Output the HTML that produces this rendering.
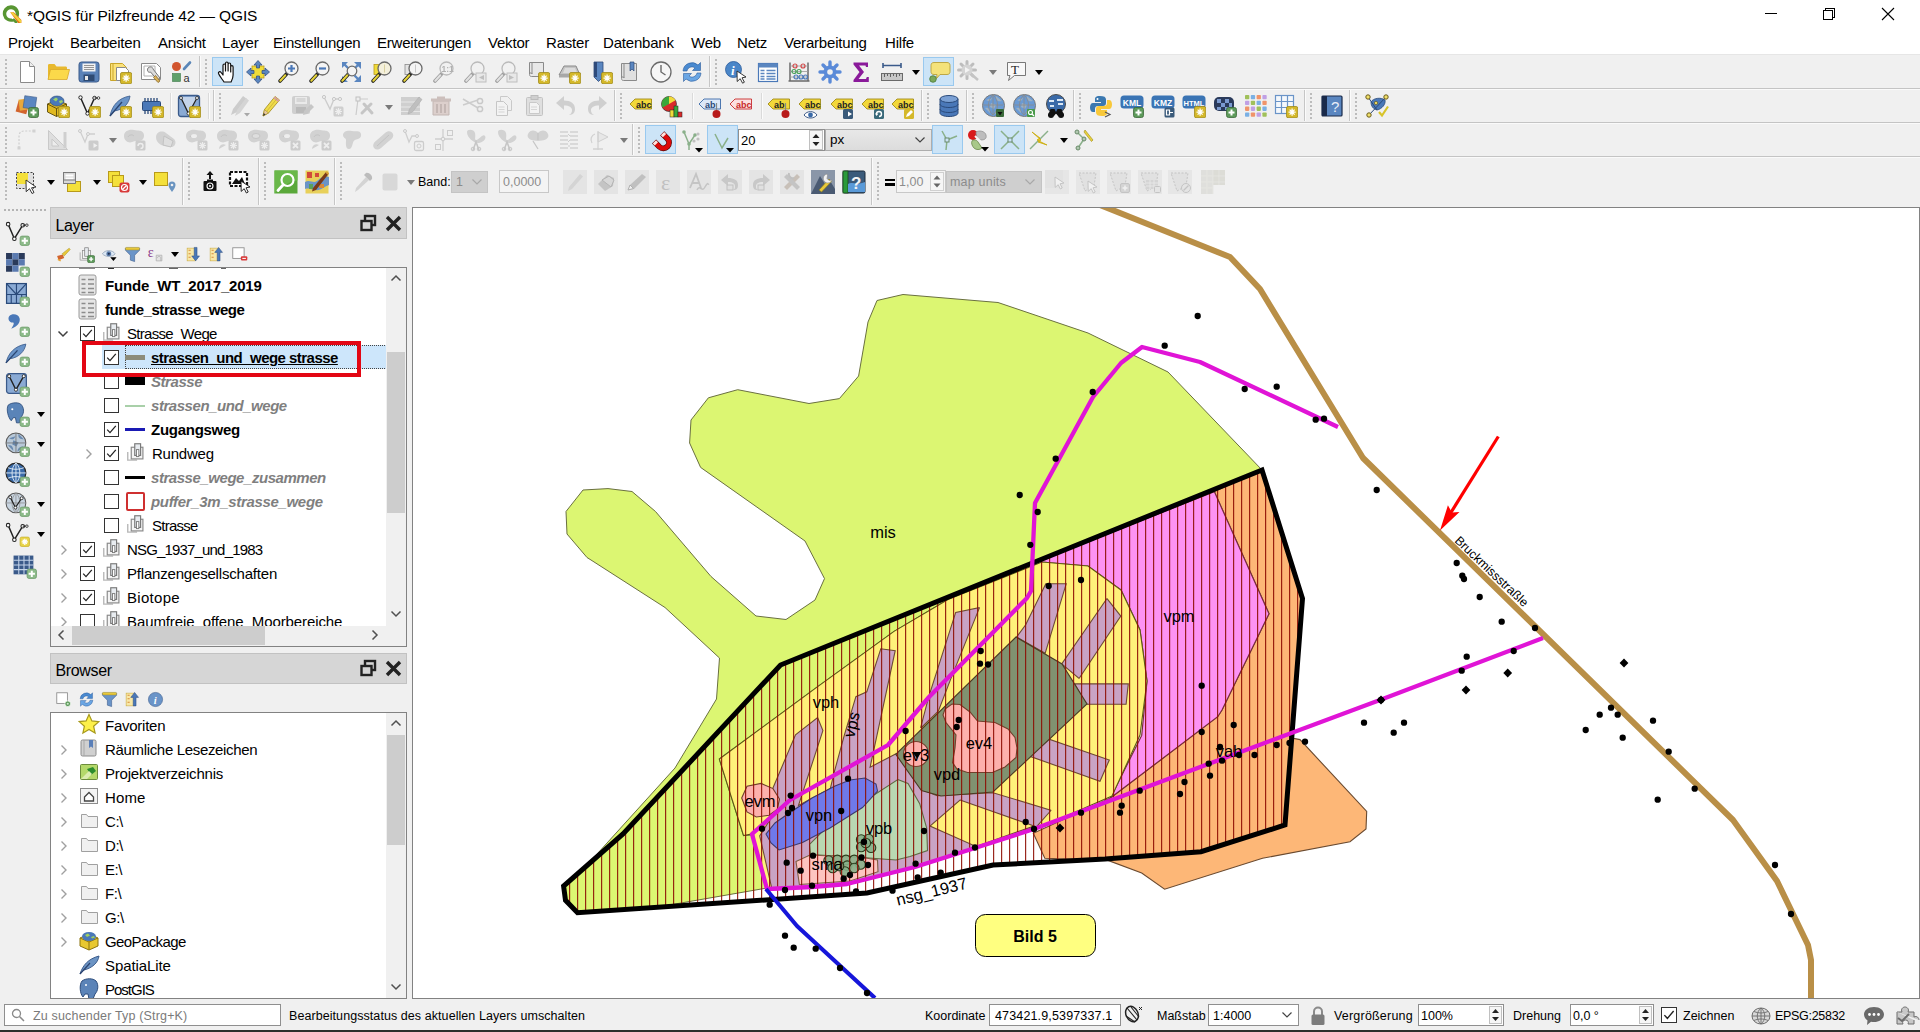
<!DOCTYPE html>
<html lang="de"><head><meta charset="utf-8"><title>QGIS</title>
<style>
*{box-sizing:border-box;margin:0;padding:0}
html,body{width:1920px;height:1032px;overflow:hidden;background:#f0f0f0;font-family:"Liberation Sans",sans-serif;color:#000}
#app{position:absolute;left:0;top:0;width:1920px;height:1032px;overflow:hidden;background:#f0f0f0}
.abs{position:absolute}
.t{position:absolute;white-space:nowrap;line-height:1}
#titlebar{position:absolute;left:0;top:0;width:1920px;height:30px;background:#fff}
#menubar{position:absolute;left:0;top:30px;width:1920px;height:25px;background:#fff}
.menu{position:absolute;top:35.3px;font-size:15px;letter-spacing:-0.2px;white-space:nowrap;line-height:1;color:#000}
.hline{position:absolute;height:1px;background:#c9c9c9;left:0;width:1920px}
.vsep{position:absolute;width:1px;background:#c8c8c8}
.grip{position:absolute;width:3px;border-left:2px dotted #bdbdbd}
.hl{position:absolute;background:#cce4f7;border:1px solid #99c9ef}
.dd{position:absolute;width:0;height:0;border-left:4px solid transparent;border-right:4px solid transparent;border-top:5px solid #000}
.dd.dis{border-top-color:#8a8a8a}
.ico{position:absolute;width:24px;height:24px}
.inp{position:absolute;background:#fff;border:1px solid #8f8f8f;font-size:13px;line-height:1;white-space:nowrap}
.inp.dis{background:#e4e4e4;border-color:#c4c4c4;color:#8c8c8c}
.panelhead{position:absolute;background:#d6d6d6;border:1px solid #c2c2c2}
.tree{position:absolute;background:#fff;border:1px solid #828282;overflow:hidden}
.row{position:absolute;font-size:15px;white-space:nowrap;line-height:1;letter-spacing:-0.45px}
.cb{position:absolute;width:15px;height:15px;border:1px solid #333;background:#fff}
.cb svg{position:absolute;left:0;top:0}
.sb{position:absolute;background:#f0f0f0}
.thumb{position:absolute;background:#cdcdcd}
</style></head><body><div id="app">

<!-- b_chrome -->
<div id="titlebar"></div><div id="menubar"></div>
<svg class="abs" style="left:1px;top:4px" width="22" height="20" viewBox="0 0 22 20">
<path d="M10 1.2a8.3 8.3 0 1 0 3.2 16l-2.6-2.7a4.7 4.7 0 1 1 3.9-3.6l2.6 2.6A8.3 8.3 0 0 0 10 1.2z" fill="#589632"/>
<path d="M9.2 8.3h3.6l7.6 7.8v2.9h-3.4z" fill="#ee7913"/><path d="M9.2 8.3l3 0.2 8 8v2.3h-1z" fill="#f0e64a" opacity=".85"/>
<path d="M13 14.2l3.4 3.6 0 1.2-2.4 0-3.2-3.4z" fill="#589632"/></svg>
<div class="t" style="left:27px;top:7.7px;font-size:15.5px;letter-spacing:-0.1px">*QGIS für Pilzfreunde 42 — QGIS</div>
<div class="abs" style="left:1765px;top:13px;width:12px;height:1px;background:#000"></div>
<div class="abs" style="left:1825px;top:8px;width:10px;height:10px;border:1px solid #000;background:#fff"></div>
<div class="abs" style="left:1823px;top:10px;width:10px;height:10px;border:1px solid #000;background:#fff"></div>
<svg class="abs" style="left:1881px;top:7px" width="14" height="14"><path d="M1 1L13 13M13 1L1 13" stroke="#000" stroke-width="1.1"/></svg>
<div class="menu" style="left:8px">Projekt</div>
<div class="menu" style="left:70px">Bearbeiten</div>
<div class="menu" style="left:158px">Ansicht</div>
<div class="menu" style="left:222px">Layer</div>
<div class="menu" style="left:273px">Einstellungen</div>
<div class="menu" style="left:377px">Erweiterungen</div>
<div class="menu" style="left:488px">Vektor</div>
<div class="menu" style="left:546px">Raster</div>
<div class="menu" style="left:603px">Datenbank</div>
<div class="menu" style="left:691px">Web</div>
<div class="menu" style="left:737px">Netz</div>
<div class="menu" style="left:784px">Verarbeitung</div>
<div class="menu" style="left:885px">Hilfe</div>
<div class="hline" style="top:54px;background:#e6e6e6"></div>
<div class="hline" style="top:88px;background:#c4c4c4"></div><div class="hline" style="top:89px;background:#fafafa"></div>
<div class="hline" style="top:122px;background:#c4c4c4"></div><div class="hline" style="top:123px;background:#fafafa"></div>
<div class="hline" style="top:156px;background:#c4c4c4"></div><div class="hline" style="top:157px;background:#fafafa"></div>
<!-- b_toolbars -->
<div class="abs" style="left:5px;top:59px;width:2px;height:27px;background-image:radial-gradient(circle at 1px 1px,#bcbcbc 0.8px,transparent 1.100px);background-size:2px 4px"></div>
<svg class="abs" style="left:15.0px;top:60.0px" width="24" height="24" viewBox="0 0 24 24"><path d="M5.500 1.500h9l5 5v16h-14z" fill="#fff" stroke="#8a8a8a"/><path d="M14.500 1.500v5h5" fill="#eee" stroke="#8a8a8a"/></svg>
<svg class="abs" style="left:45.7px;top:60.0px" width="24" height="24" viewBox="0 0 24 24"><path d="M2 5.500c0-1 .5-1.500 1.500-1.500h5l2 2.500h9c1 0 1.500.5 1.500 1.500v11h-19z" fill="#e8b92e"/><path d="M2 19.500l2.500-10h19l-2.500 10z" fill="#fbd94a" stroke="#d9a92a" stroke-width=".8"/></svg>
<svg class="abs" style="left:77.0px;top:60.0px" width="24" height="24" viewBox="0 0 24 24"><rect x="2" y="2" width="20" height="20" rx="2.500" fill="#5a82b8" stroke="#3a5a8a"/><rect x="5.500" y="3.500" width="13" height="8" fill="#f2f2f2"/><path d="M7 5.500h10M7 7.500h10M7 9.500h10" stroke="#8a8a8a" stroke-width=".9"/><rect x="6.500" y="14.500" width="11" height="6.500" fill="#2e4a72"/><rect x="8" y="16" width="3" height="4" fill="#e8e8e8"/></svg>
<svg class="abs" style="left:108.0px;top:60.0px" width="24" height="24" viewBox="0 0 24 24"><path d="M2.500 3.500h12l4 4v13h-16z" fill="#fbe27a" stroke="#c9a52a"/><path d="M5 3.500v17" stroke="#c9a52a"/><path d="M8.500 7.500h9l3 3v10h-12z" fill="#fff" stroke="#8a8a8a"/><rect x="12.500" y="12.500" width="11.200" height="11.200" rx="1.500" fill="#d4b82a" stroke="#a08a1a" stroke-width=".8"/><path d="M18.100 14.500v7.200M14.500 18.100h7.200M15.600 15.600l5 5M20.600 15.600l-5 5" stroke="#fff" stroke-width="1.300"/></svg>
<svg class="abs" style="left:139.0px;top:60.0px" width="24" height="24" viewBox="0 0 24 24"><path d="M2.500 3.500h15l4 4v12h-19z" fill="#fff" stroke="#8a8a8a"/><path d="M5 6h11v10h-11z" fill="none" stroke="#b0b0b0"/><path d="M9 8c2-2 5-1 5 1l7 9-2.500 2-7-8c-2 1-4-1-2.500-4z" fill="#dcdcdc" stroke="#6a6a6a" stroke-width=".9"/><path d="M16.500 15.500l4.500 5.500-2 1.500-4.500-5z" fill="#d9b25a" stroke="#8a6a2a" stroke-width=".8"/></svg>
<svg class="abs" style="left:169.7px;top:60.0px" width="24" height="24" viewBox="0 0 24 24"><circle cx="6.500" cy="6.500" r="4.500" fill="#d2552e"/><rect x="2.500" y="13.500" width="8" height="8" fill="#5fa06a" stroke="#3c7a4a" stroke-width=".6"/><path d="M14 9l6-6.500" stroke="#5a86b8" stroke-width="2.600" stroke-linecap="round"/><text x="13.500" y="21.500" font-size="11" font-family="Liberation Sans" fill="#333">a</text></svg>
<div class="abs" style="left:199px;top:56px;width:1px;height:31px;background:#c6c6c6"></div><div class="abs" style="left:200px;top:56px;width:1px;height:31px;background:#fbfbfb"></div>
<div class="abs" style="left:205px;top:59px;width:2px;height:27px;background-image:radial-gradient(circle at 1px 1px,#bcbcbc 0.8px,transparent 1.100px);background-size:2px 4px"></div>
<div class="hl" style="left:212px;top:57px;width:31px;height:29px"></div>
<svg class="abs" style="left:215.5px;top:60.0px" width="24" height="24" viewBox="0 0 24 24"><path d="M8 22c-2-3-4.500-6-5.500-8.500-.5-1.500 1.500-2.500 2.600-1l1.900 2.500V5.500c0-2 2.500-2 2.500 0V11 3.500c0-2 2.600-2 2.600 0V11 4.500c0-2 2.600-2 2.600 0V12 7c0-1.800 2.400-1.800 2.400 0v8c0 3-1 5-2 7z" fill="#fff" stroke="#111" stroke-width="1.200" stroke-linejoin="round"/></svg>
<svg class="abs" style="left:246.0px;top:60.0px" width="24" height="24" viewBox="0 0 24 24"><rect x="6" y="6" width="12" height="12" fill="#f0dc3a" stroke="#b89a1a" stroke-width=".8"/><path d="M12 .5l4 4.500h-2.500v3h-3v-3H8zM12 23.500l4-4.500h-2.500v-3h-3v3H8zM.5 12l4.500-4v2.500h3v3h-3V16zM23.500 12l-4.500-4v2.500h-3v3h3V16z" fill="#5a86c0" stroke="#2e4a7a" stroke-width=".7"/></svg>
<svg class="abs" style="left:276.5px;top:60.0px" width="24" height="24" viewBox="0 0 24 24"><path d="M3 21l6.500-7" stroke="#222" stroke-width="3.600" stroke-linecap="round"/><path d="M3.300 20.700l5-5.400" stroke="#e6d43a" stroke-width="2" stroke-linecap="round"/><circle cx="14.500" cy="8.500" r="6.500" fill="#f4f4f4" stroke="#6a6a6a" stroke-width="1.300"/><path d="M14.500 5v7M11 8.500h7" stroke="#4a78b8" stroke-width="2.200"/></svg>
<svg class="abs" style="left:307.8px;top:60.0px" width="24" height="24" viewBox="0 0 24 24"><path d="M3 21l6.500-7" stroke="#222" stroke-width="3.600" stroke-linecap="round"/><path d="M3.300 20.700l5-5.400" stroke="#e6d43a" stroke-width="2" stroke-linecap="round"/><circle cx="14.500" cy="8.500" r="6.500" fill="#f4f4f4" stroke="#6a6a6a" stroke-width="1.300"/><path d="M11 8.500h7" stroke="#4a78b8" stroke-width="2.200"/></svg>
<svg class="abs" style="left:339.0px;top:60.0px" width="24" height="24" viewBox="0 0 24 24"><path d="M9 2h-6v6zM15 2h7v7zM22 15v7h-7zM9 22H3v-6z" fill="#5a86c0"/><path d="M4.500 3.500l5 5M20.500 3.500l-5 5M20.500 20.500l-5-5" stroke="#5a86c0" stroke-width="2.400"/><path d="M3 21l6.500-7" stroke="#222" stroke-width="3.600" stroke-linecap="round"/><path d="M3.300 20.700l5-5.400" stroke="#e6d43a" stroke-width="2" stroke-linecap="round"/><circle cx="13" cy="11" r="4.800" fill="#f4f4f4" stroke="#6a6a6a" stroke-width="1.200"/></svg>
<svg class="abs" style="left:370.3px;top:60.0px" width="24" height="24" viewBox="0 0 24 24"><rect x="4" y="4.500" width="9" height="10" fill="#f0dc3a" stroke="#b89a1a" stroke-width=".8"/><path d="M3 21l6.500-7" stroke="#222" stroke-width="3.600" stroke-linecap="round"/><path d="M3.300 20.700l5-5.400" stroke="#e6d43a" stroke-width="2" stroke-linecap="round"/><circle cx="14.500" cy="8.500" r="6.500" fill="#f4f0dc" stroke="#6a6a6a" stroke-width="1.300"/><path d="M14.500 4.500v8" stroke="#d8d0a0" stroke-width="1"/></svg>
<svg class="abs" style="left:401.0px;top:60.0px" width="24" height="24" viewBox="0 0 24 24"><rect x="4" y="4.500" width="9" height="10" fill="#e4e4e4" stroke="#8a8a8a" stroke-width=".8"/><path d="M3 21l6.500-7" stroke="#222" stroke-width="3.600" stroke-linecap="round"/><path d="M3.300 20.700l5-5.400" stroke="#e6d43a" stroke-width="2" stroke-linecap="round"/><circle cx="14.500" cy="8.500" r="6.500" fill="#f4f4f4" stroke="#6a6a6a" stroke-width="1.300"/><path d="M14.500 4.500v8" stroke="#c8c8c8" stroke-width="1"/></svg>
<svg class="abs" style="left:431.7px;top:60.0px;filter:grayscale(1);opacity:0.4" width="24" height="24" viewBox="0 0 24 24"><path d="M3 21l6.500-7" stroke="#222" stroke-width="3.600" stroke-linecap="round"/><path d="M3.300 20.700l5-5.400" stroke="#e6d43a" stroke-width="2" stroke-linecap="round"/><circle cx="14.500" cy="8.500" r="6.500" fill="#f4f4f4" stroke="#6a6a6a" stroke-width="1.300"/><text x="9.500" y="12" font-size="8.500" font-weight="bold" font-family="Liberation Sans" fill="#555">1:1</text></svg>
<svg class="abs" style="left:463.0px;top:60.0px;filter:grayscale(1);opacity:0.4" width="24" height="24" viewBox="0 0 24 24"><path d="M3 21l6.500-7" stroke="#222" stroke-width="3.600" stroke-linecap="round"/><path d="M3.300 20.700l5-5.400" stroke="#e6d43a" stroke-width="2" stroke-linecap="round"/><circle cx="14.500" cy="8.500" r="6.500" fill="#f4f4f4" stroke="#6a6a6a" stroke-width="1.300"/><rect x="13" y="13" width="10" height="9" fill="#ddd" stroke="#777"/><path d="M21 15l-5 2.500 5 2.500z" fill="#777"/></svg>
<svg class="abs" style="left:494.0px;top:60.0px;filter:grayscale(1);opacity:0.4" width="24" height="24" viewBox="0 0 24 24"><path d="M3 21l6.500-7" stroke="#222" stroke-width="3.600" stroke-linecap="round"/><path d="M3.300 20.700l5-5.400" stroke="#e6d43a" stroke-width="2" stroke-linecap="round"/><circle cx="14.500" cy="8.500" r="6.500" fill="#f4f4f4" stroke="#6a6a6a" stroke-width="1.300"/><rect x="13" y="13" width="10" height="9" fill="#ddd" stroke="#777"/><path d="M15 15l5 2.500-5 2.500z" fill="#777"/></svg>
<svg class="abs" style="left:525.5px;top:60.0px" width="24" height="24" viewBox="0 0 24 24"><path d="M3.500 2.500h14v14h-12c-1.500 0-2-1-2-2z" fill="#e8e8e8" stroke="#8a8a8a"/><path d="M3.500 14c0-1.500 2.500-1.500 2.500 0V3" fill="none" stroke="#8a8a8a"/><rect x="12.500" y="12.500" width="11.200" height="11.200" rx="1.500" fill="#d4b82a" stroke="#a08a1a" stroke-width=".8"/><path d="M18.100 14.500v7.200M14.500 18.100h7.200M15.600 15.600l5 5M20.600 15.600l-5 5" stroke="#fff" stroke-width="1.300"/></svg>
<svg class="abs" style="left:556.7px;top:60.0px" width="24" height="24" viewBox="0 0 24 24"><path d="M2 15l5-9h12l4 9z" fill="#c4c4c4" stroke="#8a8a8a"/><path d="M2 15h21v2.500H2z" fill="#a8a8a8"/><path d="M8 8h10l2 5H6z" fill="#dcdcdc"/><rect x="12.500" y="12.500" width="11.200" height="11.200" rx="1.500" fill="#d4b82a" stroke="#a08a1a" stroke-width=".8"/><path d="M18.100 14.500v7.200M14.500 18.100h7.200M15.600 15.600l5 5M20.600 15.600l-5 5" stroke="#fff" stroke-width="1.300"/></svg>
<svg class="abs" style="left:589.0px;top:60.0px" width="24" height="24" viewBox="0 0 24 24"><path d="M5 2h9v15l-4.500 4.500L5 17z" fill="#5a86c0" stroke="#2e4a7a" stroke-width=".8"/><path d="M5 2h3v15H5z" fill="#2e4a7a"/><rect x="12.500" y="12.500" width="11.200" height="11.200" rx="1.500" fill="#d4b82a" stroke="#a08a1a" stroke-width=".8"/><path d="M18.100 14.500v7.200M14.500 18.100h7.200M15.600 15.600l5 5M20.600 15.600l-5 5" stroke="#fff" stroke-width="1.300"/></svg>
<svg class="abs" style="left:618.0px;top:60.0px" width="24" height="24" viewBox="0 0 24 24"><path d="M3.500 3.500h15v17h-13c-1.500 0-2-1-2-2z" fill="#e0e0e0" stroke="#8a8a8a"/><path d="M3.500 18c0-1.500 2.500-1.500 2.500 0V4" fill="none" stroke="#8a8a8a"/><path d="M12 2h4v9l-2-2-2 2z" fill="#5a86c0" stroke="#2e4a7a" stroke-width=".7"/></svg>
<svg class="abs" style="left:648.8px;top:60.0px" width="24" height="24" viewBox="0 0 24 24"><circle cx="12" cy="12" r="10" fill="#f6f6f6" stroke="#6a6a6a" stroke-width="1.300"/><path d="M12 5v7l4.500 3" fill="none" stroke="#6a6a6a" stroke-width="1.400"/></svg>
<svg class="abs" style="left:680.0px;top:60.0px" width="24" height="24" viewBox="0 0 24 24"><path d="M3 11a9 9 0 0 1 15-6l2.500-2.500v8h-8l2.500-2.500a5 5 0 0 0-8 3z" fill="#4a8ad0" stroke="#2a5a9a" stroke-width=".6"/><path d="M21 13a9 9 0 0 1-15 6l-2.500 2.500v-8h8l-2.500 2.500a5 5 0 0 0 8-3z" fill="#6aa6e4" stroke="#2a5a9a" stroke-width=".6"/></svg>
<div class="abs" style="left:709px;top:56px;width:1px;height:31px;background:#c6c6c6"></div><div class="abs" style="left:710px;top:56px;width:1px;height:31px;background:#fbfbfb"></div>
<div class="abs" style="left:715px;top:59px;width:2px;height:27px;background-image:radial-gradient(circle at 1px 1px,#bcbcbc 0.8px,transparent 1.100px);background-size:2px 4px"></div>
<svg class="abs" style="left:724.0px;top:60.0px" width="24" height="24" viewBox="0 0 24 24"><circle cx="9.500" cy="9.500" r="8" fill="#4a86c8" stroke="#2a5a9a" stroke-width=".8"/><text x="7" y="14.500" font-size="13" font-weight="bold" font-style="italic" font-family="Liberation Serif" fill="#fff">i</text><path d="M13 11l9 6-4 .8 2.400 4.400-1.800 1-2.400-4.500-3 2.800z" fill="#fff" stroke="#222" stroke-width=".9"/></svg>
<svg class="abs" style="left:755.5px;top:60.0px" width="24" height="24" viewBox="0 0 24 24"><rect x="2.500" y="3.500" width="19" height="18" fill="#fff" stroke="#4a78b8" stroke-width="1.200"/><rect x="2.500" y="3.500" width="19" height="4" fill="#5a86c0"/><path d="M4.500 10.500h4M10.500 10.500h9M4.500 13.500h4M10.500 13.500h9M4.500 16.500h4M10.500 16.500h9M4.500 19h4M10.500 19h9" stroke="#5a86c0" stroke-width="1.500"/></svg>
<svg class="abs" style="left:786.7px;top:60.0px" width="24" height="24" viewBox="0 0 24 24"><path d="M3 2.500v18M21 2.500v18M1.500 21h21" stroke="#6a6a6a" stroke-width="1.500"/><path d="M3 6h18M3 11.500h18M3 17h18" stroke="#999" stroke-width=".8"/><circle cx="8" cy="6" r="2" fill="none" stroke="#d24a4a" stroke-width="1.200"/><circle cx="16" cy="6" r="2" fill="none" stroke="#d24a4a" stroke-width="1.200"/><circle cx="7" cy="11.500" r="2" fill="none" stroke="#4aa05a" stroke-width="1.200"/><circle cx="12" cy="11.500" r="2" fill="none" stroke="#4aa05a" stroke-width="1.200"/><circle cx="9" cy="17" r="2" fill="none" stroke="#4a78b8" stroke-width="1.200"/><circle cx="14" cy="17" r="2" fill="none" stroke="#4a78b8" stroke-width="1.200"/><circle cx="18.500" cy="17" r="2" fill="none" stroke="#4a78b8" stroke-width="1.200"/></svg>
<svg class="abs" style="left:818.0px;top:60.0px" width="24" height="24" viewBox="0 0 24 24"><g stroke="#5a8ad8" stroke-width="3.400" stroke-linecap="round"><path d="M12 2v20M2 12h20M5 5l14 14M19 5L5 19"/></g><circle cx="12" cy="12" r="6.500" fill="#5a8ad8"/><circle cx="12" cy="12" r="2.800" fill="#f0f0f0"/></svg>
<svg class="abs" style="left:848.8px;top:60.0px" width="24" height="24" viewBox="0 0 24 24"><path d="M4.500 2.500h14.500v4.500h-2l-.5-1.500h-6.500l5 6.500-5.500 7h7.500l.8-2h2v5H4.500v-2l6-8-6-7.500z" fill="#8a1a9a"/></svg>
<svg class="abs" style="left:880.0px;top:60.0px" width="24" height="24" viewBox="0 0 24 24"><path d="M3 5.500h18M3 3v5M21 3v5" stroke="#3a5a8a" stroke-width="1.600"/><rect x="1.500" y="13.500" width="21" height="7" fill="#c8c8c8" stroke="#6a6a6a"/><path d="M4.500 14v3M7.500 14v2M10.500 14v3M13.500 14v2M16.500 14v3M19.500 14v2" stroke="#555" stroke-width=".9"/></svg>
<div class="abs" style="left:911.5px;top:70px;width:0;height:0;border-left:4px solid transparent;border-right:4px solid transparent;border-top:5px solid #000"></div>
<div class="hl" style="left:923px;top:57px;width:31px;height:29px"></div>
<svg class="abs" style="left:926.6px;top:60.0px" width="24" height="24" viewBox="0 0 24 24"><path d="M7 2.500h13c2 0 3 1 3 3v6c0 2-1 3-3 3h-7l-3.500 4 .5-4H7c-2 0-3-1-3-3v-6c0-2 1-3 3-3z" fill="#f4e27a" stroke="#b8a03a" stroke-width=".9"/><circle cx="6" cy="19" r="3.300" fill="#7aa85a" stroke="#4a7a3a" stroke-width=".8"/></svg>
<svg class="abs" style="left:957.0px;top:60.0px" width="24" height="24" viewBox="0 0 24 24"><g stroke="#bdbdbd" stroke-width="3" stroke-linecap="round"><path d="M10 1.500v17M1.500 10h17M4 4l12 12M16 4L4 16"/></g><circle cx="10" cy="10" r="5.500" fill="#d4d4d4"/><path d="M8 7l5 3-5 3z" fill="#f4f4f4"/><path d="M14 14l7 6" stroke="#c4c4c4" stroke-width="2.500"/></svg>
<div class="abs" style="left:988.5px;top:70px;width:0;height:0;border-left:4px solid transparent;border-right:4px solid transparent;border-top:5px solid #7a7a7a"></div>
<svg class="abs" style="left:1003.0px;top:61.0px" width="24" height="24" viewBox="0 0 24 24"><path d="M4.500 1.500h18v13h-11l-6 5 1.500-5h-2.500z" fill="#f8f8f8" stroke="#6a6a6a" stroke-width=".9"/><text x="8" y="12.500" font-size="13" font-family="Liberation Serif" fill="#222">T</text></svg>
<div class="abs" style="left:1034.5px;top:70px;width:0;height:0;border-left:4px solid transparent;border-right:4px solid transparent;border-top:5px solid #000"></div>
<div class="abs" style="left:5px;top:93px;width:2px;height:27px;background-image:radial-gradient(circle at 1px 1px,#bcbcbc 0.8px,transparent 1.100px);background-size:2px 4px"></div>
<svg class="abs" style="left:15.0px;top:94.0px" width="24" height="24" viewBox="0 0 24 24"><rect x="2" y="8" width="11" height="11" transform="rotate(15 7 13)" fill="#d2642e"/><rect x="4" y="5" width="11" height="11" transform="rotate(-8 9 10)" fill="#e8a83a"/><rect x="9" y="2.500" width="12" height="12" transform="rotate(8 15 8)" fill="#5a86c0" stroke="#3a5a8a" stroke-width=".6"/><rect x="13.500" y="13.500" width="10" height="10" rx="2" fill="#5d9a5a" stroke="#3c6a3a" stroke-width=".8"/><path d="M18.500 15.500v6M15.500 18.500h6" stroke="#fff" stroke-width="2"/></svg>
<svg class="abs" style="left:46.0px;top:94.0px" width="24" height="24" viewBox="0 0 24 24"><path d="M1.500 10l9-4 10 4v8l-10 4.500-9-4.500z" fill="#e0b820" stroke="#5a4a0a" stroke-width=".9"/><path d="M1.500 10l9 4.500 10-4.500M10.500 14.500v8" fill="none" stroke="#5a4a0a" stroke-width=".9"/><ellipse cx="11" cy="7" rx="7" ry="5" fill="#4a78b8" stroke="#2a4a7a" stroke-width=".6"/><path d="M7 5.500l3-2 2 1.500-2 2.500zM13 7l3-1 1 2-3 1.500z" fill="#9ad06a"/><rect x="12.500" y="12.500" width="11.200" height="11.200" rx="1.500" fill="#d4b82a" stroke="#a08a1a" stroke-width=".8"/><path d="M18.100 14.500v7.200M14.500 18.100h7.200M15.600 15.600l5 5M20.600 15.600l-5 5" stroke="#fff" stroke-width="1.300"/></svg>
<svg class="abs" style="left:77.0px;top:94.0px" width="24" height="24" viewBox="0 0 24 24"><path d="M3.500 3.500l7 16 7-15.500" fill="none" stroke="#222" stroke-width="1.500"/><circle cx="3.500" cy="3.500" r="1.700" fill="#fff" stroke="#222"/><circle cx="10.500" cy="19.500" r="1.700" fill="#fff" stroke="#222"/><circle cx="17.500" cy="4" r="1.700" fill="#fff" stroke="#222"/><path d="M17.500 4h4" stroke="#222"/><circle cx="21.500" cy="4" r="1.300" fill="#fff" stroke="#222" stroke-width=".8"/><rect x="12.500" y="12.500" width="11.200" height="11.200" rx="1.500" fill="#d4b82a" stroke="#a08a1a" stroke-width=".8"/><path d="M18.100 14.500v7.200M14.500 18.100h7.200M15.600 15.600l5 5M20.600 15.600l-5 5" stroke="#fff" stroke-width="1.300"/></svg>
<svg class="abs" style="left:108.0px;top:94.0px" width="24" height="24" viewBox="0 0 24 24"><path d="M2 22C4 12 10 4 22 2c-1 8-7 14-16 15z" fill="#6a94c8" stroke="#3a5a8a" stroke-width=".8"/><path d="M2 22L14 8" stroke="#2a4470" stroke-width="1.300"/><rect x="12.500" y="12.500" width="11.200" height="11.200" rx="1.500" fill="#d4b82a" stroke="#a08a1a" stroke-width=".8"/><path d="M18.100 14.500v7.200M14.500 18.100h7.200M15.600 15.600l5 5M20.600 15.600l-5 5" stroke="#fff" stroke-width="1.300"/></svg>
<svg class="abs" style="left:139.5px;top:94.0px" width="24" height="24" viewBox="0 0 24 24"><rect x="2.500" y="7.500" width="18" height="9" rx="1" fill="#4a78b8" stroke="#2a4a7a"/><path d="M5 7.500V4M8 7.500V4M11 7.500V4M14 7.500V4M17 7.500V4M5 16.500V20M8 16.500V20M11 16.500V20M14 16.500V20M17 16.500V20" stroke="#2a4a7a" stroke-width="1.300"/><rect x="12.500" y="12.500" width="11.200" height="11.200" rx="1.500" fill="#d4b82a" stroke="#a08a1a" stroke-width=".8"/><path d="M18.100 14.500v7.200M14.500 18.100h7.200M15.600 15.600l5 5M20.600 15.600l-5 5" stroke="#fff" stroke-width="1.300"/></svg>
<div class="abs" style="left:170px;top:93px;width:1px;height:26px;background:#dadada"></div><div class="abs" style="left:171px;top:93px;width:1px;height:26px;background:#fbfbfb"></div>
<svg class="abs" style="left:177.0px;top:94.0px" width="24" height="24" viewBox="0 0 24 24"><rect x="1.500" y="1.500" width="21" height="21" rx="2.500" fill="#8aaad4" stroke="#3a5a8a" stroke-width="1.300"/><path d="M3 3h18l-9 17z" fill="#c4d4ea"/><path d="M4 4l7.500 15.500L20 4" fill="none" stroke="#222" stroke-width="1.300"/><circle cx="4" cy="4" r="1.500" fill="#fff" stroke="#222" stroke-width=".8"/><circle cx="11.500" cy="19.500" r="1.500" fill="#fff" stroke="#222" stroke-width=".8"/><circle cx="20" cy="4" r="1.500" fill="#fff" stroke="#222" stroke-width=".8"/><rect x="12.500" y="12.500" width="11.200" height="11.200" rx="1.500" fill="#d4b82a" stroke="#a08a1a" stroke-width=".8"/><path d="M18.100 14.500v7.200M14.500 18.100h7.200M15.600 15.600l5 5M20.600 15.600l-5 5" stroke="#fff" stroke-width="1.300"/></svg>
<div class="abs" style="left:208px;top:93px;width:1px;height:26px;background:#dadada"></div><div class="abs" style="left:209px;top:93px;width:1px;height:26px;background:#fbfbfb"></div>
<div class="abs" style="left:213px;top:90px;width:1px;height:31px;background:#c6c6c6"></div><div class="abs" style="left:214px;top:90px;width:1px;height:31px;background:#fbfbfb"></div>
<div class="abs" style="left:219px;top:93px;width:2px;height:27px;background-image:radial-gradient(circle at 1px 1px,#bcbcbc 0.8px,transparent 1.100px);background-size:2px 4px"></div>
<svg class="abs" style="left:227.6px;top:94.0px;opacity:0.7" width="24" height="24" viewBox="0 0 24 24"><path d="M3 21l2-6L15 2l4 3L9 18z" fill="#bdbdbd"/><path d="M7 22l2-6L18 4l3 2.500L12 19z" fill="#c9c9c9"/><path d="M16 19h6l-3 3.500z" fill="#8a8a8a"/></svg>
<svg class="abs" style="left:258.8px;top:94.0px" width="24" height="24" viewBox="0 0 24 24"><path d="M4 22l1.500-6.500L16 2.500l4.500 3.500L9.500 19z" fill="#f0dc4a" stroke="#a8922a" stroke-width=".9"/><path d="M4 22l1.500-6.500 4 3.500z" fill="#e8c8a0" stroke="#a8922a" stroke-width=".7"/><path d="M4 22l.7-3 1.800 1.600z" fill="#333"/><path d="M16 2.500l4.500 3.500-1.500 2-4.500-3.500z" fill="#d8a0a0"/><path d="M8 17L18 4.500" stroke="#c8b03a" stroke-width=".8"/></svg>
<svg class="abs" style="left:290.0px;top:94.0px;opacity:0.75" width="24" height="24" viewBox="0 0 24 24"><rect x="2" y="2" width="18" height="18" rx="2" fill="#c4c4c4"/><rect x="5" y="3" width="12" height="7" fill="#e8e8e8"/><path d="M6.500 5h9M6.500 7h9" stroke="#b4b4b4"/><rect x="6" y="13" width="10" height="6" fill="#a8a8a8"/><path d="M13 21l1-4 7-7 3 3-7 7z" fill="#b8b8b8"/></svg>
<svg class="abs" style="left:321.0px;top:94.0px;opacity:0.75" width="24" height="24" viewBox="0 0 24 24"><path d="M3 3l6 12 4-10h6" fill="none" stroke="#c0c0c0" stroke-width="1.400"/><circle cx="3" cy="3" r="1.600" fill="#eee" stroke="#b8b8b8"/><circle cx="13" cy="5" r="1.600" fill="#eee" stroke="#b8b8b8"/><circle cx="19" cy="5" r="1.600" fill="#eee" stroke="#b8b8b8"/><rect x="12.500" y="12.500" width="10" height="10" rx="1.500" fill="#c4c4c4"/><path d="M17.500 14v7M14 17.500h7M15 15l5 5M20 15l-5 5" stroke="#eee" stroke-width="1.200"/></svg>
<svg class="abs" style="left:352.6px;top:94.0px;opacity:0.75" width="24" height="24" viewBox="0 0 24 24"><path d="M5 5h10M5 5L3 21" fill="none" stroke="#c0c0c0" stroke-width="1.200"/><rect x="3" y="3" width="4" height="4" fill="#eee" stroke="#b0b0b0"/><path d="M9 19l9-9M11 10l8 9" stroke="#b8b8b8" stroke-width="3" stroke-linecap="round"/></svg>
<div class="abs" style="left:384.5px;top:105px;width:0;height:0;border-left:4px solid transparent;border-right:4px solid transparent;border-top:5px solid #7a7a7a"></div>
<svg class="abs" style="left:398.8px;top:94.0px;opacity:0.8" width="24" height="24" viewBox="0 0 24 24"><rect x="2" y="3" width="19" height="18" fill="#c8c8c8"/><path d="M2 8h19M2 13h19M2 17.500h19" stroke="#e4e4e4" stroke-width="1.200"/><path d="M9 20l1.500-5L20 3l3 2.500L13.500 18z" fill="#b4b4b4" stroke="#a0a0a0" stroke-width=".6"/></svg>
<svg class="abs" style="left:429.0px;top:94.0px;opacity:0.8" width="24" height="24" viewBox="0 0 24 24"><path d="M4 7h16v14H4z" fill="#d8c8c4" stroke="#b8a8a4"/><path d="M2 4.500h20v3H2zM8 2.500h8v2H8z" fill="#c4b4b0"/><path d="M8 10v9M12 10v9M16 10v9" stroke="#b0a09c" stroke-width="1.500"/></svg>
<svg class="abs" style="left:461.0px;top:94.0px;opacity:0.8" width="24" height="24" viewBox="0 0 24 24"><path d="M2 5l15 9M2 11l15-5" stroke="#c4c4c4" stroke-width="1.600"/><circle cx="19" cy="7" r="2.600" fill="none" stroke="#c0c0c0" stroke-width="1.500"/><circle cx="19" cy="15" r="2.600" fill="none" stroke="#c0c0c0" stroke-width="1.500"/></svg>
<svg class="abs" style="left:491.5px;top:94.0px;opacity:0.8" width="24" height="24" viewBox="0 0 24 24"><path d="M8.500 2.500h7l4 4v10h-11z" fill="#f0f0f0" stroke="#c0c0c0"/><path d="M4.500 7.500h7l4 4v10h-11z" fill="#f4f4f4" stroke="#bcbcbc"/><path d="M6.500 13h6M6.500 15.500h6M6.500 18h6" stroke="#d0d0d0"/></svg>
<svg class="abs" style="left:522.8px;top:94.0px;opacity:0.8" width="24" height="24" viewBox="0 0 24 24"><rect x="3.500" y="3.500" width="16" height="18" rx="1" fill="#dcdcdc" stroke="#b8b8b8"/><rect x="8" y="1.500" width="7" height="4" fill="#c8c8c8" stroke="#b0b0b0"/><path d="M6.500 8.500h7l3 3v8h-10z" fill="#f4f4f4" stroke="#c0c0c0"/><path d="M8 13h6M8 15.500h6" stroke="#d0d0d0"/></svg>
<svg class="abs" style="left:554.0px;top:94.0px;opacity:0.8" width="24" height="24" viewBox="0 0 24 24"><path d="M2 9l8-7v4.500c7 0 11 3 11 8.500s-4 6-6 6c2-1 3-2.500 3-5s-3-4.500-8-4.500V16z" fill="#c8c8c8"/></svg>
<svg class="abs" style="left:584.7px;top:94.0px;opacity:0.8" width="24" height="24" viewBox="0 0 24 24"><path d="M22 9l-8-7v4.500c-7 0-11 3-11 8.500s4 6 6 6c-2-1-3-2.500-3-5s3-4.500 8-4.500V16z" fill="#c8c8c8"/></svg>
<div class="abs" style="left:614px;top:90px;width:1px;height:31px;background:#c6c6c6"></div><div class="abs" style="left:615px;top:90px;width:1px;height:31px;background:#fbfbfb"></div>
<div class="abs" style="left:620px;top:93px;width:2px;height:27px;background-image:radial-gradient(circle at 1px 1px,#bcbcbc 0.8px,transparent 1.100px);background-size:2px 4px"></div>
<svg class="abs" style="left:629.0px;top:96.0px" width="24" height="24" viewBox="0 0 24 24"><path d="M1 8l5-5h16.500v10H6z" fill="#f2d83a" stroke="#a08a1a" stroke-width=".9"/><text x="7" y="11.500" font-size="9" font-weight="bold" font-family="Liberation Sans" fill="#222">abc</text></svg>
<svg class="abs" style="left:660.3px;top:95.0px" width="24" height="24" viewBox="0 0 24 24"><circle cx="9" cy="9" r="7.500" fill="#d82a2a" stroke="#222" stroke-width=".6"/><path d="M9 9V1.500A7.500 7.500 0 0 0 2.500 12.500z" fill="#3aa83a"/><path d="M9 9V1.500a7.500 7.500 0 0 1 6.500 3.800z" fill="#f0dc3a"/><rect x="10" y="15" width="4" height="7" fill="#f0dc3a" stroke="#222" stroke-width=".5"/><rect x="14" y="11" width="4" height="11" fill="#3aa83a" stroke="#222" stroke-width=".5"/><rect x="18" y="17" width="4" height="5" fill="#d82a2a" stroke="#222" stroke-width=".5"/></svg>
<div class="abs" style="left:692px;top:93px;width:1px;height:26px;background:#dadada"></div><div class="abs" style="left:693px;top:93px;width:1px;height:26px;background:#fbfbfb"></div>
<svg class="abs" style="left:698.0px;top:96.0px" width="24" height="24" viewBox="0 0 24 24"><path d="M1 8l5-5h16.500v10H6z" fill="#dce8f8" stroke="#3a6aa8" stroke-width=".9"/><text x="7" y="11.500" font-size="9" font-weight="bold" font-family="Liberation Sans" fill="#2a4a7a">ab</text><circle cx="18.500" cy="18" r="4" fill="#b81a1a"/><path d="M18.500 14V7" stroke="#888" stroke-width="1.200"/></svg>
<svg class="abs" style="left:729.0px;top:96.0px" width="24" height="24" viewBox="0 0 24 24"><path d="M1 8l5-5h16.500v10H6z" fill="#fce0e0" stroke="#c82a2a" stroke-width=".9"/><text x="7" y="11.500" font-size="9" font-weight="bold" font-family="Liberation Sans" fill="#c82a2a">abc</text></svg>
<div class="abs" style="left:761px;top:93px;width:1px;height:26px;background:#dadada"></div><div class="abs" style="left:762px;top:93px;width:1px;height:26px;background:#fbfbfb"></div>
<svg class="abs" style="left:767.0px;top:96.0px" width="24" height="24" viewBox="0 0 24 24"><path d="M1 8l5-5h16.500v10H6z" fill="#f2d83a" stroke="#a08a1a" stroke-width=".9"/><text x="7" y="11.500" font-size="9" font-weight="bold" font-family="Liberation Sans" fill="#222">ab</text><circle cx="18.500" cy="18" r="4" fill="#b81a1a"/><path d="M18.500 14V7" stroke="#888" stroke-width="1.200"/></svg>
<svg class="abs" style="left:798.0px;top:96.0px" width="24" height="24" viewBox="0 0 24 24"><path d="M1 8l5-5h16.500v10H6z" fill="#f2d83a" stroke="#a08a1a" stroke-width=".9"/><text x="7" y="11.500" font-size="9" font-weight="bold" font-family="Liberation Sans" fill="#222">abc</text><path d="M6 19c3-4.500 10-4.500 13 0-3 4-10 4-13 0z" fill="#fff" stroke="#2a4a7a" stroke-width=".9"/><circle cx="12.500" cy="19" r="2.400" fill="#3a6aa8"/></svg>
<svg class="abs" style="left:829.5px;top:96.0px" width="24" height="24" viewBox="0 0 24 24"><path d="M1 8l5-5h16.500v10H6z" fill="#f2d83a" stroke="#a08a1a" stroke-width=".9"/><text x="7" y="11.500" font-size="9" font-weight="bold" font-family="Liberation Sans" fill="#222">abc</text><rect x="13" y="13" width="10" height="10" rx="1.500" fill="#3a5a7a"/><path d="M15 18h3v-2.500l4 2.500-4 2.500V18z" fill="#fff"/></svg>
<svg class="abs" style="left:860.7px;top:96.0px" width="24" height="24" viewBox="0 0 24 24"><path d="M1 8l5-5h16.500v10H6z" fill="#f2d83a" stroke="#a08a1a" stroke-width=".9"/><text x="7" y="11.500" font-size="9" font-weight="bold" font-family="Liberation Sans" fill="#222">abc</text><rect x="13" y="13" width="10" height="10" rx="1.500" fill="#3a6a7a"/><path d="M15.500 18a2.500 2.500 0 1 1 2.500 2.500" fill="none" stroke="#fff" stroke-width="1.400"/><path d="M14 17.500l1.500 2.500 1.800-2.300z" fill="#fff"/></svg>
<svg class="abs" style="left:891.3px;top:96.0px" width="24" height="24" viewBox="0 0 24 24"><path d="M1 8l5-5h16.500v10H6z" fill="#f2d83a" stroke="#a08a1a" stroke-width=".9"/><text x="7" y="11.500" font-size="9" font-weight="bold" font-family="Liberation Sans" fill="#222">abc</text><rect x="13" y="13" width="10" height="10" rx="1.500" fill="#d4b82a"/><path d="M15 21l1-3 4-4 2 2-4 4z" fill="#fff"/></svg>
<div class="abs" style="left:921px;top:90px;width:1px;height:31px;background:#c6c6c6"></div><div class="abs" style="left:922px;top:90px;width:1px;height:31px;background:#fbfbfb"></div>
<div class="abs" style="left:927px;top:93px;width:2px;height:27px;background-image:radial-gradient(circle at 1px 1px,#bcbcbc 0.8px,transparent 1.100px);background-size:2px 4px"></div>
<svg class="abs" style="left:936.7px;top:94.0px" width="24" height="24" viewBox="0 0 24 24"><path d="M3 5v14c0 2 4 3.500 9 3.500s9-1.500 9-3.500V5z" fill="#4a78b8" stroke="#2a4a7a"/><ellipse cx="12" cy="5" rx="9" ry="3.500" fill="#7aa0d4" stroke="#2a4a7a"/><path d="M3 10c0 2 4 3.500 9 3.500s9-1.500 9-3.500M3 15c0 2 4 3.500 9 3.500s9-1.500 9-3.500" fill="none" stroke="#2a4a7a"/></svg>
<div class="abs" style="left:966px;top:90px;width:1px;height:31px;background:#c6c6c6"></div><div class="abs" style="left:967px;top:90px;width:1px;height:31px;background:#fbfbfb"></div>
<div class="abs" style="left:972px;top:93px;width:2px;height:27px;background-image:radial-gradient(circle at 1px 1px,#bcbcbc 0.8px,transparent 1.100px);background-size:2px 4px"></div>
<svg class="abs" style="left:981.5px;top:94.0px" width="24" height="24" viewBox="0 0 24 24"><circle cx="11.500" cy="11.500" r="11" fill="#6a9ad4" stroke="#7a7a7a" stroke-width="1"/><path d="M4 6c3 2 5 1 6-2M14 2c-1 4 2 6 6 5M3 14c3-1 6 1 5 5M13 20c0-4 3-6 7-5M9 9l5 2-2 4-4-2z" fill="#9ab0c4" stroke="none"/><path d="M1 11h20M11 1v20M11 1c-6 5-6 15 0 20M11 1c6 5 6 15 0 20" fill="none" stroke="#8a8a8a" stroke-width=".8"/><rect x="14" y="15" width="8" height="8" rx="1" fill="#3a6a3a"/><path d="M15.500 18h5l-2.500 3.500z" fill="#111"/></svg>
<svg class="abs" style="left:1012.8px;top:94.0px" width="24" height="24" viewBox="0 0 24 24"><circle cx="11.500" cy="11.500" r="11" fill="#6a9ad4" stroke="#7a7a7a" stroke-width="1"/><path d="M4 6c3 2 5 1 6-2M14 2c-1 4 2 6 6 5M3 14c3-1 6 1 5 5M13 20c0-4 3-6 7-5M9 9l5 2-2 4-4-2z" fill="#9ab0c4" stroke="none"/><path d="M1 11h20M11 1v20M11 1c-6 5-6 15 0 20M11 1c6 5 6 15 0 20" fill="none" stroke="#8a8a8a" stroke-width=".8"/><rect x="14" y="15" width="8" height="8" rx="1" fill="#4a9a4a"/><circle cx="17.500" cy="18.500" r="2" fill="none" stroke="#fff" stroke-width="1.100"/><path d="M19 20l2 2" stroke="#fff" stroke-width="1.200"/></svg>
<svg class="abs" style="left:1044.0px;top:94.0px" width="24" height="24" viewBox="0 0 24 24"><circle cx="12" cy="10" r="9.500" fill="#3a6aa8" stroke="#4a4a4a" stroke-width="1"/><path d="M5 6h5v2H5zM13 5h6v2h-6zM6 11h4v2H6zM14 9h5v2h-5z" fill="#dce8f4"/><path d="M4 22l2.500-7h4l1.500 3 1.500-3h4L20 22h-6l-2-2.500L10 22z" fill="#111"/><circle cx="7" cy="21" r="3" fill="#111"/><circle cx="17" cy="21" r="3" fill="#111"/></svg>
<div class="abs" style="left:1073px;top:90px;width:1px;height:31px;background:#c6c6c6"></div><div class="abs" style="left:1074px;top:90px;width:1px;height:31px;background:#fbfbfb"></div>
<div class="abs" style="left:1079px;top:93px;width:2px;height:27px;background-image:radial-gradient(circle at 1px 1px,#bcbcbc 0.8px,transparent 1.100px);background-size:2px 4px"></div>
<svg class="abs" style="left:1088.8px;top:94.0px" width="24" height="24" viewBox="0 0 24 24"><path d="M11 2c-5 0-5 2-5 3.500V8h6v1H4c-2 0-3 2-3 4.500S2 18 4 18h2v-3c0-2 1-3 3-3h5c2 0 3-1 3-3V5.500C17 3 15 2 11 2z" fill="#3a78b0"/><path d="M13 22c5 0 5-2 5-3.500V16h-6v-1h8c2 0 3-2 3-4.500S22 6 20 6h-2v3c0 2-1 3-3 3h-5c-2 0-3 1-3 3v3.500C7 21 9 22 13 22z" fill="#f8c83a"/><circle cx="8.500" cy="5" r="1" fill="#fff"/><path d="M16 18l5 2.500-5 2.500" fill="none" stroke="#555" stroke-width="1.200"/></svg>
<svg class="abs" style="left:1120.0px;top:94.0px" width="24" height="24" viewBox="0 0 24 24"><rect x=".5" y="1.500" width="23" height="13" rx="3.500" fill="#3a74b4"/><text x="12" y="11.500" font-size="8.5" font-weight="bold" font-family="Liberation Sans" fill="#fff" text-anchor="middle">KML</text><rect x="13.500" y="13.500" width="10" height="10" rx="2" fill="#5d9a5a" stroke="#3c6a3a" stroke-width=".8"/><path d="M18.500 15.500v6M15.500 18.500h6" stroke="#fff" stroke-width="2"/></svg>
<svg class="abs" style="left:1151.0px;top:94.0px" width="24" height="24" viewBox="0 0 24 24"><rect x=".5" y="1.500" width="23" height="13" rx="3.500" fill="#3a74b4"/><text x="12" y="11.500" font-size="8.5" font-weight="bold" font-family="Liberation Sans" fill="#fff" text-anchor="middle">KMZ</text><rect x="13.500" y="13.500" width="10" height="10" rx="1.500" fill="#3a5a7a"/><path d="M15.500 16h3v5h-3zM18.500 18.500h3.500" fill="none" stroke="#fff" stroke-width="1.200"/></svg>
<svg class="abs" style="left:1182.0px;top:94.0px" width="24" height="24" viewBox="0 0 24 24"><rect x=".5" y="1.500" width="23" height="13" rx="3.500" fill="#3a74b4"/><text x="12" y="11.500" font-size="7.5" font-weight="bold" font-family="Liberation Sans" fill="#fff" text-anchor="middle">HTML</text><rect x="12.500" y="12.500" width="11.200" height="11.200" rx="1.500" fill="#d4b82a" stroke="#a08a1a" stroke-width=".8"/><path d="M18.100 14.500v7.200M14.500 18.100h7.200M15.600 15.600l5 5M20.600 15.600l-5 5" stroke="#fff" stroke-width="1.300"/></svg>
<svg class="abs" style="left:1212.6px;top:94.0px" width="24" height="24" viewBox="0 0 24 24"><rect x="1" y="3" width="20" height="14" rx="5" fill="#2a3a5a"/><path d="M4 5h4v4H4zM12 5h4v4h-4zM8 9h4v4H8zM16 9h3v4h-3zM4 13h4v3H4zM12 13h4v3h-4z" fill="#7a9ad0"/><rect x="13.500" y="13.500" width="10" height="10" rx="2" fill="#5d9a5a" stroke="#3c6a3a" stroke-width=".8"/><path d="M18.500 15.500v6M15.500 18.500h6" stroke="#fff" stroke-width="2"/></svg>
<svg class="abs" style="left:1243.8px;top:94.0px" width="24" height="24" viewBox="0 0 24 24"><rect x="1.0" y="1.0" width="4.300" height="4.300" rx=".8" fill="#a0c05a"/><rect x="6.8" y="1.0" width="4.300" height="4.300" rx=".8" fill="#7ab0e4"/><rect x="12.6" y="1.0" width="4.300" height="4.300" rx=".8" fill="#f0946a"/><rect x="18.4" y="1.0" width="4.300" height="4.300" rx=".8" fill="#c0a0e4"/><rect x="1.0" y="6.8" width="4.300" height="4.300" rx=".8" fill="#c0a0e4"/><rect x="6.8" y="6.8" width="4.300" height="4.300" rx=".8" fill="#a0c05a"/><rect x="12.6" y="6.8" width="4.300" height="4.300" rx=".8" fill="#7ab0e4"/><rect x="18.4" y="6.8" width="4.300" height="4.300" rx=".8" fill="#f0946a"/><rect x="1.0" y="12.6" width="4.300" height="4.300" rx=".8" fill="#f0946a"/><rect x="6.8" y="12.6" width="4.300" height="4.300" rx=".8" fill="#c0a0e4"/><rect x="12.6" y="12.6" width="4.300" height="4.300" rx=".8" fill="#a0c05a"/><rect x="18.4" y="12.6" width="4.300" height="4.300" rx=".8" fill="#7ab0e4"/><rect x="1.0" y="18.4" width="4.300" height="4.300" rx=".8" fill="#7ab0e4"/><rect x="6.8" y="18.4" width="4.300" height="4.300" rx=".8" fill="#f0946a"/><rect x="12.6" y="18.4" width="4.300" height="4.300" rx=".8" fill="#c0a0e4"/><rect x="18.4" y="18.4" width="4.300" height="4.300" rx=".8" fill="#a0c05a"/></svg>
<svg class="abs" style="left:1274.0px;top:94.0px" width="24" height="24" viewBox="0 0 24 24"><rect x="1.500" y="1.500" width="18" height="18" fill="#f4f8fc" stroke="#6a94c8" stroke-width="1.200"/><path d="M7.500 1.500v18M13.500 1.500v18M1.500 7.500h18M1.500 13.500h18" stroke="#6a94c8" stroke-width="1.200"/><rect x="12.500" y="12.500" width="11.200" height="11.200" rx="1.500" fill="#d4b82a" stroke="#a08a1a" stroke-width=".8"/><path d="M18.100 14.500v7.200M14.500 18.100h7.200M15.600 15.600l5 5M20.600 15.600l-5 5" stroke="#fff" stroke-width="1.300"/></svg>
<div class="abs" style="left:1304px;top:90px;width:1px;height:31px;background:#c6c6c6"></div><div class="abs" style="left:1305px;top:90px;width:1px;height:31px;background:#fbfbfb"></div>
<div class="abs" style="left:1310px;top:93px;width:2px;height:27px;background-image:radial-gradient(circle at 1px 1px,#bcbcbc 0.8px,transparent 1.100px);background-size:2px 4px"></div>
<svg class="abs" style="left:1320.0px;top:94.0px" width="24" height="24" viewBox="0 0 24 24"><rect x="2" y="2" width="20" height="20" rx="1" fill="#5a86c0" stroke="#1a2a4a" stroke-width="1.200"/><rect x="2" y="2" width="5" height="20" fill="#1a2a4a"/><text x="11" y="18" font-size="15" font-family="Liberation Sans" fill="#e8eef8">?</text></svg>
<div class="abs" style="left:1349px;top:90px;width:1px;height:31px;background:#c6c6c6"></div><div class="abs" style="left:1350px;top:90px;width:1px;height:31px;background:#fbfbfb"></div>
<div class="abs" style="left:1355px;top:93px;width:2px;height:27px;background-image:radial-gradient(circle at 1px 1px,#bcbcbc 0.8px,transparent 1.100px);background-size:2px 4px"></div>
<svg class="abs" style="left:1365.3px;top:94.0px" width="24" height="24" viewBox="0 0 24 24"><path d="M6 8c2-4 10-5 14-2 1 4-3 9-8 10-4-1-6-4-6-8z" fill="#4a78b8" stroke="#2a4a7a" stroke-width=".8"/><path d="M3 3l9 13M21 3L4 21" stroke="#2a4a7a" stroke-width="1"/><circle cx="3" cy="3" r="2.200" fill="#f0e06a" stroke="#6a5a1a"/><circle cx="21" cy="3" r="2.200" fill="#f0e06a" stroke="#6a5a1a"/><circle cx="4" cy="21" r="2.200" fill="#f0e06a" stroke="#6a5a1a"/><circle cx="11" cy="9" r="1.600" fill="#f0e06a" stroke="#6a5a1a" stroke-width=".7"/><path d="M14 18l3 3.500 6-9" fill="none" stroke="#d8c42a" stroke-width="2.200"/></svg>
<div class="abs" style="left:5px;top:127px;width:2px;height:27px;background-image:radial-gradient(circle at 1px 1px,#bcbcbc 0.8px,transparent 1.100px);background-size:2px 4px"></div>
<svg class="abs" style="left:14.7px;top:127.5px;opacity:0.75" width="24" height="24" viewBox="0 0 24 24"><path d="M4 20V8c0-3 2-5 5-5h10" fill="none" stroke="#c4c4c4" stroke-width="1.200" stroke-dasharray="2 1.500"/><rect x="2.500" y="18.500" width="3" height="3" fill="#c8c8c8"/><rect x="17.500" y="1.500" width="3" height="3" fill="#c8c8c8"/></svg>
<svg class="abs" style="left:45.7px;top:127.5px;opacity:0.75" width="24" height="24" viewBox="0 0 24 24"><path d="M2.500 21.500v-19l19 19z" fill="#d8d8d8" stroke="#bcbcbc"/><path d="M6 18v-7l7 7z" fill="#ececec" stroke="#bcbcbc"/><path d="M19 4v16" stroke="#c4c4c4" stroke-width="3"/></svg>
<svg class="abs" style="left:76.5px;top:127.5px;opacity:0.75" width="24" height="24" viewBox="0 0 24 24"><path d="M3 3l5 11 3-8h7" fill="none" stroke="#c4c4c4" stroke-width="1.300"/><circle cx="3" cy="3" r="1.500" fill="#eee" stroke="#bcbcbc"/><circle cx="11" cy="6" r="1.500" fill="#eee" stroke="#bcbcbc"/><rect x="11.500" y="12.500" width="10" height="10" rx="1.500" fill="#c0c0c0"/><path d="M13.500 17.500h3v-2.500l4 2.500-4 2.500v-2.500z" fill="#f0f0f0"/></svg>
<div class="abs" style="left:108.5px;top:138px;width:0;height:0;border-left:4px solid transparent;border-right:4px solid transparent;border-top:5px solid #7a7a7a"></div>
<svg class="abs" style="left:123.0px;top:127.5px;opacity:0.75" width="24" height="24" viewBox="0 0 24 24"><path d="M1 8c0-5 5-7 10-6s7 0 9 2.500 1 7-2 8-6 0-9 1.500-8-1-8-6z" fill="#c8c8c8"/><path d="M5 9c1-2 4-3 6-1" stroke="#b4b4b4" fill="none"/><rect x="12.500" y="12.500" width="10" height="10" rx="1.500" fill="#c0c0c0"/><path d="M15 18a2.500 2.500 0 1 1 2.500 2.500" fill="none" stroke="#eee" stroke-width="1.400"/></svg>
<svg class="abs" style="left:153.6px;top:127.5px;opacity:0.75" width="24" height="24" viewBox="0 0 24 24"><path d="M2 9c0-5 6-7 10-4l8 6c3 3 1 8-3 8l-7-1c-4-1-8-4-8-9z" fill="#c8c8c8"/><path d="M10 8l9 5-2 6-8-2z" fill="#d8d8d8" stroke="#b4b4b4"/></svg>
<svg class="abs" style="left:185.0px;top:127.5px;opacity:0.75" width="24" height="24" viewBox="0 0 24 24"><path d="M1 8c0-5 5-7 10-6s7 0 9 2.500 1 7-2 8-6 0-9 1.500-8-1-8-6z" fill="#c8c8c8"/><path d="M5 9c1-2 4-3 6-1" stroke="#b4b4b4" fill="none"/><ellipse cx="9" cy="8" rx="3" ry="2" fill="#eee"/><rect x="12.500" y="12.500" width="10" height="10" rx="1.500" fill="#c0c0c0"/><path d="M17.500 14v7M14 17.500h7M15 15l5 5M20 15l-5 5" stroke="#ececec" stroke-width="1.200"/></svg>
<svg class="abs" style="left:215.7px;top:127.5px;opacity:0.75" width="24" height="24" viewBox="0 0 24 24"><path d="M1 8c0-5 5-7 10-6s7 0 9 2.500 1 7-2 8-6 0-9 1.500-8-1-8-6z" fill="#c8c8c8"/><path d="M5 9c1-2 4-3 6-1" stroke="#b4b4b4" fill="none"/><path d="M3 21c0-4 4-6 7-4z" fill="#c8c8c8"/><rect x="12.500" y="12.500" width="10" height="10" rx="1.500" fill="#c0c0c0"/><path d="M17.500 14v7M14 17.500h7M15 15l5 5M20 15l-5 5" stroke="#ececec" stroke-width="1.200"/></svg>
<svg class="abs" style="left:247.0px;top:127.5px;opacity:0.75" width="24" height="24" viewBox="0 0 24 24"><path d="M1 8c0-5 5-7 10-6s7 0 9 2.500 1 7-2 8-6 0-9 1.500-8-1-8-6z" fill="#c8c8c8"/><path d="M5 9c1-2 4-3 6-1" stroke="#b4b4b4" fill="none"/><ellipse cx="9" cy="8" rx="4" ry="2.500" fill="#d8d8d8" stroke="#b8b8b8"/><rect x="12.500" y="12.500" width="10" height="10" rx="1.500" fill="#c0c0c0"/><path d="M17.500 14v7M14 17.500h7M15 15l5 5M20 15l-5 5" stroke="#ececec" stroke-width="1.200"/></svg>
<svg class="abs" style="left:278.0px;top:127.5px;opacity:0.75" width="24" height="24" viewBox="0 0 24 24"><path d="M1 8c0-5 5-7 10-6s7 0 9 2.500 1 7-2 8-6 0-9 1.500-8-1-8-6z" fill="#c8c8c8"/><path d="M5 9c1-2 4-3 6-1" stroke="#b4b4b4" fill="none"/><ellipse cx="9" cy="8" rx="3" ry="2" fill="#eee"/><rect x="12.500" y="12.500" width="10" height="10" rx="1.500" fill="#c0c0c0"/><path d="M15 15l5 5M20 15l-5 5" stroke="#ececec" stroke-width="1.800"/></svg>
<svg class="abs" style="left:308.8px;top:127.5px;opacity:0.75" width="24" height="24" viewBox="0 0 24 24"><path d="M1 8c0-5 5-7 10-6s7 0 9 2.500 1 7-2 8-6 0-9 1.500-8-1-8-6z" fill="#c8c8c8"/><path d="M5 9c1-2 4-3 6-1" stroke="#b4b4b4" fill="none"/><path d="M3 21c0-4 4-6 7-4z" fill="#c8c8c8"/><rect x="12.500" y="12.500" width="10" height="10" rx="1.500" fill="#c0c0c0"/><path d="M15 15l5 5M20 15l-5 5" stroke="#ececec" stroke-width="1.800"/></svg>
<svg class="abs" style="left:340.0px;top:127.5px;opacity:0.75" width="24" height="24" viewBox="0 0 24 24"><path d="M3 7c0-4 5-5 9-4s8-1 9 3-3 5-6 6-2 9-6 9-3-7-3-9-3-2-3-5z" fill="#c8c8c8"/></svg>
<svg class="abs" style="left:371.0px;top:127.5px;opacity:0.75" width="24" height="24" viewBox="0 0 24 24"><path d="M3 20c-2-3 0-6 3-8l8-7c3-3 7-2 8 1s-1 5-4 7l-8 7c-3 2-5 2-7 0z" fill="#c8c8c8"/><path d="M6 18l12-11" stroke="#b4b4b4"/></svg>
<svg class="abs" style="left:402.0px;top:127.5px;opacity:0.75" width="24" height="24" viewBox="0 0 24 24"><path d="M3 3l4 11 3-6h5" fill="none" stroke="#c4c4c4" stroke-width="1.300"/><circle cx="3" cy="3" r="1.500" fill="#eee" stroke="#bcbcbc"/><circle cx="15" cy="8" r="1.500" fill="#eee" stroke="#bcbcbc"/><rect x="12.500" y="13.500" width="9" height="9" rx="1.500" fill="none" stroke="#c0c0c0" stroke-width="1.300"/><circle cx="17" cy="18" r="2" fill="none" stroke="#c0c0c0"/></svg>
<svg class="abs" style="left:432.6px;top:127.5px;opacity:0.75" width="24" height="24" viewBox="0 0 24 24"><path d="M10 1v22M2 11h18" stroke="#c4c4c4" stroke-width="1.300"/><rect x="14.500" y="2.500" width="5" height="5" fill="none" stroke="#c0c0c0"/><rect x="2.500" y="16.500" width="5" height="5" fill="none" stroke="#c0c0c0"/><circle cx="10" cy="11" r="1.800" fill="#eee" stroke="#bcbcbc"/></svg>
<svg class="abs" style="left:463.8px;top:127.5px;opacity:0.75" width="24" height="24" viewBox="0 0 24 24"><path d="M3 4c0-3 7-3 8 1s-1 6 1 7 7-7 9-4-3 7-7 7-11-5-11-11z" fill="#c8c8c8"/><path d="M9 22l3-8 3 8" fill="none" stroke="#b8b8b8" stroke-width="1.600"/><circle cx="9" cy="21" r="1.800" fill="none" stroke="#b8b8b8"/><circle cx="15" cy="21" r="1.800" fill="none" stroke="#b8b8b8"/></svg>
<svg class="abs" style="left:495.0px;top:127.5px;opacity:0.75" width="24" height="24" viewBox="0 0 24 24"><path d="M3 4c0-3 7-3 8 1s-1 6 1 7 7-7 9-4-3 7-7 7-11-5-11-11z" fill="#c8c8c8"/><path d="M9 22l3-8 3 8" fill="none" stroke="#b8b8b8" stroke-width="1.600"/><circle cx="9" cy="21" r="1.800" fill="none" stroke="#b8b8b8"/><circle cx="15" cy="21" r="1.800" fill="none" stroke="#b8b8b8"/></svg>
<svg class="abs" style="left:526.0px;top:127.5px;opacity:0.75" width="24" height="24" viewBox="0 0 24 24"><path d="M2 6c2-5 8-4 10-1 2-3 8-4 10 1s-4 7-10 7S0 11 2 6z" fill="#c8c8c8"/><path d="M12 5v7M7 13l5 8" stroke="#b8b8b8" stroke-width="1.300"/></svg>
<svg class="abs" style="left:557.0px;top:127.5px;opacity:0.75" width="24" height="24" viewBox="0 0 24 24"><path d="M3 4h8M3 8h8M3 12h8M3 16h8M3 20h8M13 4h8M13 8h8M13 12h8M13 16h8M13 20h8" stroke="#c8c8c8" stroke-width="1.400"/><path d="M11 6l2 2M11 14l2-2M11 18l2 0" stroke="#c0c0c0"/></svg>
<svg class="abs" style="left:588.0px;top:127.5px;opacity:0.75" width="24" height="24" viewBox="0 0 24 24"><path d="M10 4l10 5-10 5z" fill="#e4e4e4" stroke="#c4c4c4"/><path d="M10 3v19M5 21h10" stroke="#c8c8c8" stroke-width="1.300"/><path d="M7 6a6 6 0 0 0-3 9" fill="none" stroke="#c8c8c8" stroke-width="1.300"/></svg>
<div class="abs" style="left:619.5px;top:138px;width:0;height:0;border-left:4px solid transparent;border-right:4px solid transparent;border-top:5px solid #7a7a7a"></div>
<div class="abs" style="left:632px;top:124px;width:1px;height:31px;background:#c6c6c6"></div><div class="abs" style="left:633px;top:124px;width:1px;height:31px;background:#fbfbfb"></div>
<div class="abs" style="left:638px;top:127px;width:2px;height:27px;background-image:radial-gradient(circle at 1px 1px,#bcbcbc 0.8px,transparent 1.100px);background-size:2px 4px"></div>
<div class="hl" style="left:645px;top:125px;width:31px;height:29px"></div>
<svg class="abs" style="left:648.5px;top:127.5px" width="24" height="24" viewBox="0 0 24 24"><path d="M13.200 5.400L18.450 10.650A5.730 5.730 0 0 1 10.350 18.750L5.100 13.500" fill="none" stroke="#4a0808" stroke-width="5.800"/><path d="M13.500 5.700L18.450 10.650A5.730 5.730 0 0 1 10.350 18.750L5.400 13.800" fill="none" stroke="#dc0a0a" stroke-width="4.600"/><path d="M13.500 5.700L15.500 7.700M5.400 13.800L7.400 15.800" stroke="#fde4e0" stroke-width="4.600"/></svg>
<svg class="abs" style="left:680.0px;top:128.5px" width="24" height="24" viewBox="0 0 24 24"><path d="M4 3l5 12 6-9M9 15v6" fill="none" stroke="#8ab08a" stroke-width="1.500"/><circle cx="4" cy="3" r="1.800" fill="#8ab08a"/><circle cx="15" cy="6" r="1.800" fill="#8ab08a"/><circle cx="9" cy="15" r="1.800" fill="#8ab08a"/><circle cx="18" cy="5" r="1.600" fill="#c0c0c0"/><circle cx="18" cy="10" r="1.600" fill="#c0c0c0"/><circle cx="14" cy="12" r="1.600" fill="#c0c0c0"/><path d="M15 19h8l-4 4.500z" fill="#000"/></svg>
<div class="hl" style="left:707px;top:125px;width:31px;height:29px"></div>
<svg class="abs" style="left:710.5px;top:128.5px" width="24" height="24" viewBox="0 0 24 24"><path d="M4 5l7 14 6-10" fill="none" stroke="#8ab08a" stroke-width="1.500"/><path d="M15 19h8l-4 4.500z" fill="#000"/></svg>
<div class="inp" style="left:738px;top:129px;width:87px;height:22px"></div>
<div class="t" style="left:741px;top:134px;font-size:13px">20</div>
<div class="abs" style="left:809px;top:130px;width:14px;height:20px;border:1px solid #c0c0c0;background:#f6f6f6"></div>
<svg class="abs" style="left:809px;top:130px" width="14" height="20"><path d="M3.500 8L7 4L10.500 8zM3.500 12L7 16L10.500 12z" fill="#222"/></svg>
<div class="abs" style="left:825px;top:129px;width:107px;height:22px;border:1px solid #adadad;background:linear-gradient(#e8e8e8,#dcdcdc)"></div>
<div class="t" style="left:830px;top:133px;font-size:13.500px">px</div>
<svg class="abs" style="left:914px;top:136px" width="12" height="8"><path d="M1.500 1.500L6 6L10.500 1.500" fill="none" stroke="#444" stroke-width="1.200"/></svg>
<div class="hl" style="left:932px;top:125px;width:31px;height:29px"></div>
<svg class="abs" style="left:935.6px;top:127.5px" width="24" height="24" viewBox="0 0 24 24"><path d="M6 3l5 9 10-4M11 12l-1 10" fill="none" stroke="#8ab08a" stroke-width="1.500"/><rect x="9" y="10" width="4" height="4" fill="#cce4f7" stroke="#6a8a6a" stroke-width="1"/></svg>
<svg class="abs" style="left:966.0px;top:127.5px" width="24" height="24" viewBox="0 0 24 24"><circle cx="7" cy="7" r="5" fill="#d81a1a"/><path d="M10 4c3-2 9-1 10 3s-2 5-5 5-5-3-5-8z" fill="#bdbdbd" stroke="#8a8a8a" stroke-width=".7"/><path d="M6 13c1-2 5-1 6 1l4 6c-2 2-6 2-8 0s-3-5-2-7z" fill="#a8c88a" stroke="#5a7a3a" stroke-width=".7"/><path d="M9 8l6 6" stroke="#f4f4f4" stroke-width="2"/><path d="M15 19h8l-4 4.500z" fill="#000"/></svg>
<div class="hl" style="left:994px;top:125px;width:31px;height:29px"></div>
<svg class="abs" style="left:997.5px;top:127.5px" width="24" height="24" viewBox="0 0 24 24"><path d="M3 3l18 18M21 3L3 21" stroke="#8ab08a" stroke-width="1.500"/><rect x="10" y="10" width="4" height="4" fill="#cce4f7" stroke="#6a8a6a"/></svg>
<svg class="abs" style="left:1028.0px;top:127.5px" width="24" height="24" viewBox="0 0 24 24"><path d="M2 21L20 3" stroke="#8ab08a" stroke-width="1.500"/><path d="M4 4l8 6-3 2 10 5-9-3 3-2z" fill="#f0d01a" stroke="#c8a80a" stroke-width=".8"/></svg>
<div class="abs" style="left:1059.5px;top:138px;width:0;height:0;border-left:4px solid transparent;border-right:4px solid transparent;border-top:5px solid #000"></div>
<svg class="abs" style="left:1073.0px;top:127.5px" width="24" height="24" viewBox="0 0 24 24"><path d="M4 4l7 7-6 9" fill="none" stroke="#8ab08a" stroke-width="1.500"/><circle cx="4" cy="4" r="2" fill="#b0c8b0" stroke="#6a8a6a"/><circle cx="11" cy="11" r="2" fill="#b0c8b0" stroke="#6a8a6a"/><circle cx="5" cy="20" r="2" fill="#b0c8b0" stroke="#6a8a6a"/><path d="M12 2l8 10-1.500 1.500L11 4z" fill="#e8d43a" stroke="#a8922a" stroke-width=".7"/></svg>
<div class="abs" style="left:5px;top:162px;width:2px;height:40px;background-image:radial-gradient(circle at 1px 1px,#bcbcbc 0.8px,transparent 1.100px);background-size:2px 4px"></div>
<svg class="abs" style="left:15.0px;top:170.0px" width="24" height="24" viewBox="0 0 24 24"><rect x="1.500" y="2.500" width="17" height="16" fill="#e0e0e0" stroke="#444" stroke-width="1" stroke-dasharray="2 1.500"/><rect x="2" y="3" width="11" height="11" fill="#f4e03a"/><path d="M11 10l10 7-4.500.8 2.500 4.700-2 1-2.500-4.800-3.300 3z" fill="#fff" stroke="#222" stroke-width=".9"/></svg>
<div class="abs" style="left:46.5px;top:180px;width:0;height:0;border-left:4px solid transparent;border-right:4px solid transparent;border-top:5px solid #000"></div>
<svg class="abs" style="left:61.3px;top:170.0px" width="24" height="24" viewBox="0 0 24 24"><rect x="2.500" y="2.500" width="12" height="11" fill="#d8d8d8" stroke="#7a7a7a"/><path d="M4.500 5.500h8M4.500 8.500h8" stroke="#fff" stroke-width="1.800"/><rect x="6.500" y="11.500" width="13" height="10" fill="#f4e03a" stroke="#b89a1a"/><path d="M2.500 10h12v3.500h-12z" fill="#d8d8d8" stroke="#7a7a7a"/></svg>
<div class="abs" style="left:92.5px;top:180px;width:0;height:0;border-left:4px solid transparent;border-right:4px solid transparent;border-top:5px solid #000"></div>
<svg class="abs" style="left:107.0px;top:170.0px" width="24" height="24" viewBox="0 0 24 24"><rect x="1.500" y="1.500" width="11" height="11" fill="#f4e03a" stroke="#b89a1a"/><rect x="5.500" y="5.500" width="11" height="11" fill="#f4e03a" stroke="#b89a1a"/><rect x="12.500" y="12.500" width="10" height="10" rx="2" fill="#d83a3a"/><circle cx="17.500" cy="17.500" r="3" fill="none" stroke="#fff" stroke-width="1.200"/><path d="M15.500 19.500l4-4" stroke="#fff" stroke-width="1.200"/></svg>
<div class="abs" style="left:138.5px;top:180px;width:0;height:0;border-left:4px solid transparent;border-right:4px solid transparent;border-top:5px solid #000"></div>
<svg class="abs" style="left:153.0px;top:170.0px" width="24" height="24" viewBox="0 0 24 24"><rect x="1.500" y="2.500" width="13" height="13" fill="#f4e03a" stroke="#b89a1a"/><path d="M19 22c-2-3-3.500-5-3.500-7a3.500 3.500 0 0 1 7 0c0 2-1.500 4-3.500 7z" fill="#6a94c0"/><circle cx="19" cy="15" r="1.300" fill="#f0f0f0"/></svg>
<div class="abs" style="left:182px;top:158px;width:1px;height:47px;background:#c6c6c6"></div><div class="abs" style="left:183px;top:158px;width:1px;height:47px;background:#fbfbfb"></div>
<div class="abs" style="left:188px;top:162px;width:2px;height:40px;background-image:radial-gradient(circle at 1px 1px,#bcbcbc 0.8px,transparent 1.100px);background-size:2px 4px"></div>
<svg class="abs" style="left:197.7px;top:170.0px" width="24" height="24" viewBox="0 0 24 24"><path d="M12 1l3.500 4h-2.500v4h-2V5H8.500z" fill="#111"/><rect x="5.500" y="11" width="13" height="10" rx="1" fill="#111"/><rect x="9" y="9.500" width="6" height="2" fill="#111"/><circle cx="12" cy="16" r="3" fill="none" stroke="#fff" stroke-width="1.100"/><circle cx="12" cy="16" r="1" fill="#fff"/></svg>
<svg class="abs" style="left:227.5px;top:170.0px" width="24" height="24" viewBox="0 0 24 24"><rect x="2" y="2" width="17" height="14" fill="#fff" stroke="#111" stroke-width="2.200" stroke-dasharray="3 1.500"/><path d="M4 14l4-6 3 3 3-4 3 7z" fill="#111"/><path d="M13 11l9 6-4 .8 2.200 4.200-1.800 1-2.200-4.300-3 2.700z" fill="#fff" stroke="#111" stroke-width=".9"/></svg>
<div class="abs" style="left:258px;top:158px;width:1px;height:47px;background:#c6c6c6"></div><div class="abs" style="left:259px;top:158px;width:1px;height:47px;background:#fbfbfb"></div>
<div class="abs" style="left:264px;top:162px;width:2px;height:40px;background-image:radial-gradient(circle at 1px 1px,#bcbcbc 0.8px,transparent 1.100px);background-size:2px 4px"></div>
<svg class="abs" style="left:274.0px;top:170.0px" width="24" height="24" viewBox="0 0 24 24"><rect x=".5" y=".5" width="23" height="23" fill="#5aa83a"/><path d="M.5 .5h23v10c-8 1-15 5-23 13z" fill="#6ab84a"/><circle cx="13.500" cy="10" r="6" fill="none" stroke="#fff" stroke-width="2.200"/><path d="M9 15l-5 5.500" stroke="#fff" stroke-width="2.800" stroke-linecap="round"/></svg>
<svg class="abs" style="left:304.7px;top:170.0px" width="24" height="24" viewBox="0 0 24 24"><rect x=".5" y=".5" width="23" height="23" fill="#e8d05a"/><path d="M0 12c5-3 8 2 12-1s6-6 12-4v8c-6 2-8 6-14 5S3 18 0 19z" fill="#6a94c8"/><path d="M2 2h5v6H2zM10 3h4v4h-4z" fill="#d24a3a"/><path d="M4 14h4v5H4z" fill="#5aa05a"/><path d="M14 14h5v4h-5z" fill="#d88a3a"/><path d="M8 18L21 2l2.500 2L11 20l-4 1.500z" fill="#7a3a1a"/><path d="M21 2l2.500 2" stroke="#d8a03a" stroke-width="2"/></svg>
<div class="abs" style="left:334px;top:158px;width:1px;height:47px;background:#c6c6c6"></div><div class="abs" style="left:335px;top:158px;width:1px;height:47px;background:#fbfbfb"></div>
<div class="abs" style="left:340px;top:162px;width:2px;height:40px;background-image:radial-gradient(circle at 1px 1px,#bcbcbc 0.8px,transparent 1.100px);background-size:2px 4px"></div>
<svg class="abs" style="left:350.0px;top:170.0px" width="24" height="24" viewBox="0 0 24 24"><path d="M5 22l1-4L16 7l3 3L8 20z" fill="#d4d4d4"/><path d="M14 5l6 6 2-2c1-3-3-7-6-6z" fill="#bcbcbc"/></svg>
<svg class="abs" style="left:378.0px;top:170.0px" width="24" height="24" viewBox="0 0 24 24"><rect x="4.500" y="3.500" width="15" height="17" rx="2" fill="#d8d8d8"/></svg>
<div class="abs" style="left:406.5px;top:180px;width:0;height:0;border-left:4px solid transparent;border-right:4px solid transparent;border-top:5px solid #7a7a7a"></div>
<div class="t" style="left:418px;top:176px;font-size:12.500px">Band:</div>
<div class="inp dis" style="left:451px;top:171px;width:37px;height:22px;background:#cfcfcf;border-color:#c4c4c4"></div>
<div class="t" style="left:456px;top:176px;font-size:12.500px;color:#8c8c8c">1</div>
<svg class="abs" style="left:471px;top:178px" width="12" height="8"><path d="M1.500 1.500L6 6L10.500 1.500" fill="none" stroke="#a8a8a8" stroke-width="1.200"/></svg>
<div class="inp" style="left:499px;top:170px;width:50px;height:23px;background:#f4f4f4;border-color:#c8c8c8"></div>
<div class="t" style="left:503px;top:176px;font-size:12.500px;color:#8c8c8c">0,0000</div>
<div class="abs" style="left:563.3px;top:170px;width:24px;height:24px;background:#e4e4e4"></div>
<svg class="abs" style="left:563.3px;top:170.0px" width="24" height="24" viewBox="0 0 24 24"><path d="M5 21l1-4L17 4l3 2.500L9 19z" fill="#d4d4d4"/></svg>
<div class="abs" style="left:593.5px;top:170px;width:24px;height:24px;background:#e4e4e4"></div>
<svg class="abs" style="left:593.5px;top:170.0px" width="24" height="24" viewBox="0 0 24 24"><path d="M4 14l9-9 7 3-1 8-8 5z" fill="#c4c4c4"/><path d="M8 10l7-4 5 4-3 7z" fill="#d8d8d8" stroke="#b4b4b4"/></svg>
<div class="abs" style="left:624.7px;top:170px;width:24px;height:24px;background:#e4e4e4"></div>
<svg class="abs" style="left:624.7px;top:170.0px" width="24" height="24" viewBox="0 0 24 24"><path d="M3 20l2-5L17 4l4 3L9 19z" fill="#c0c0c0"/><path d="M3 20l2-5 3.500 3.500z" fill="#f0f0f0" stroke="#b0b0b0"/></svg>
<div class="abs" style="left:655.6px;top:170px;width:24px;height:24px;background:#e4e4e4"></div>
<svg class="abs" style="left:655.6px;top:170.0px" width="24" height="24" viewBox="0 0 24 24"><text x="5" y="20" font-size="22" font-family="Liberation Serif" fill="#c0c0c0">ε</text></svg>
<div class="abs" style="left:686.6px;top:170px;width:24px;height:24px;background:#e4e4e4"></div>
<svg class="abs" style="left:686.6px;top:170.0px" width="24" height="24" viewBox="0 0 24 24"><path d="M3 18L9 4l5 14M5.500 13h7" fill="none" stroke="#c4c4c4" stroke-width="1.800"/><path d="M10 20c3-6 5 3 8-3s3-2 4-3" fill="none" stroke="#c4c4c4" stroke-width="1.500"/></svg>
<div class="abs" style="left:717.5px;top:170px;width:24px;height:24px;background:#e4e4e4"></div>
<svg class="abs" style="left:717.5px;top:170.0px" width="24" height="24" viewBox="0 0 24 24"><path d="M3 10l7-6v4c6 0 10 2 10 7s-3 5-5 5c2-1 2-2 2-4s-2-4-7-4v4z" fill="#c8c8c8"/><rect x="9" y="15" width="6" height="5" fill="#e0e0e0" stroke="#c0c0c0"/></svg>
<div class="abs" style="left:749.0px;top:170px;width:24px;height:24px;background:#e4e4e4"></div>
<svg class="abs" style="left:749.0px;top:170.0px" width="24" height="24" viewBox="0 0 24 24"><path d="M21 10l-7-6v4C8 8 4 10 4 15s3 5 5 5c-2-1-2-2-2-4s2-4 7-4v4z" fill="#c8c8c8"/><rect x="9" y="15" width="6" height="5" fill="#e0e0e0" stroke="#c0c0c0"/></svg>
<div class="abs" style="left:779.8px;top:170px;width:24px;height:24px;background:#e4e4e4"></div>
<svg class="abs" style="left:779.8px;top:170.0px" width="24" height="24" viewBox="0 0 24 24"><path d="M4 17L17 4l3 3L7 20z" fill="#c8c0b8"/><path d="M4 7l3-3 13 13-3 3z" fill="#c4c4c4"/><path d="M9 3a4 4 0 0 0 5 5" fill="none" stroke="#c0c0c0" stroke-width="2"/></svg>
<svg class="abs" style="left:810.8px;top:170.0px" width="24" height="24" viewBox="0 0 24 24"><rect x="0" y="0" width="24" height="24" fill="#8a96a8"/><path d="M0 24L9 6l5 8 4-5 6 10v5z" fill="#4a5a72"/><path d="M8 20L18 9l2.500 2.500L10.500 22z" fill="#e8c83a" stroke="#8a7a1a" stroke-width=".6"/><path d="M16 4a4.500 4.500 0 1 0 5 6l-3 .5-2-2 .5-3z" fill="#f0f0f0" stroke="#8a8a8a" stroke-width=".6"/></svg>
<svg class="abs" style="left:842.0px;top:170.0px" width="24" height="24" viewBox="0 0 24 24"><rect x="1" y="1" width="22" height="22" rx="1.500" fill="#3a5a7a" stroke="#1a2a3a"/><rect x="1" y="1" width="5" height="22" fill="#2a9a3a" stroke="#1a4a1a" stroke-width=".8"/><path d="M6 14c4-3 8 2 17-2v10H6z" fill="#5a9ad8"/><text x="9" y="19" font-size="17" font-weight="bold" font-family="Liberation Sans" fill="#f4f4f4">?</text></svg>
<div class="abs" style="left:871px;top:158px;width:1px;height:47px;background:#c6c6c6"></div><div class="abs" style="left:872px;top:158px;width:1px;height:47px;background:#fbfbfb"></div>
<div class="abs" style="left:877px;top:162px;width:2px;height:40px;background-image:radial-gradient(circle at 1px 1px,#bcbcbc 0.8px,transparent 1.100px);background-size:2px 4px"></div>
<div class="abs" style="left:885px;top:179px;width:10px;height:2px;background:#000"></div><div class="abs" style="left:885px;top:183px;width:10px;height:3px;background:#000"></div>
<div class="inp" style="left:896px;top:170px;width:50px;height:23px;background:#f4f4f4;border-color:#c8c8c8"></div>
<div class="t" style="left:899px;top:176px;font-size:12.500px;color:#8c8c8c">1,00</div>
<div class="abs" style="left:930px;top:172px;width:14px;height:19px;border:1px solid #d0d0d0;background:#f6f6f6"></div>
<svg class="abs" style="left:930px;top:172px" width="14" height="19"><path d="M3.500 7.500L7 3.500L10.500 7.500zM3.500 11.500L7 15.500L10.500 11.500z" fill="#666"/></svg>
<div class="inp dis" style="left:946px;top:171px;width:96px;height:22px;background:#cfcfcf;border-color:#c4c4c4"></div>
<div class="t" style="left:950px;top:176px;font-size:12.500px;color:#8c8c8c;letter-spacing:.2px">map units</div>
<svg class="abs" style="left:1024px;top:178px" width="12" height="8"><path d="M1.500 1.500L6 6L10.500 1.500" fill="none" stroke="#a8a8a8" stroke-width="1.200"/></svg>
<div class="abs" style="left:1045.0px;top:170px;width:24px;height:24px;background:#e6e6e6"></div>
<svg class="abs" style="left:1045.0px;top:170.0px;opacity:0.8" width="24" height="24" viewBox="0 0 24 24"><rect x="0" y="0" width="18" height="18" fill="#e2e2e2"/><path d="M10 7l9 6-4 .8 2.200 4.200-1.800 1-2.200-4.300-3 2.700z" fill="#f4f4f4" stroke="#b8b8b8" stroke-width=".9"/></svg>
<div class="abs" style="left:1075.6px;top:170px;width:24px;height:24px;background:#e6e6e6"></div>
<svg class="abs" style="left:1075.6px;top:170.0px;opacity:0.8" width="24" height="24" viewBox="0 0 24 24"><path d="M3 3h17l-2 13-9 5z" fill="#e0e0e0" stroke="#bcbcbc" stroke-dasharray="2 1.500"/><path d="M12 11l9 6-4 .8 2.200 4.200-1.800 1-2.200-4.300-3 2.700z" fill="#f4f4f4" stroke="#b8b8b8" stroke-width=".9"/></svg>
<div class="abs" style="left:1106.6px;top:170px;width:24px;height:24px;background:#e6e6e6"></div>
<svg class="abs" style="left:1106.6px;top:170.0px;opacity:0.8" width="24" height="24" viewBox="0 0 24 24"><path d="M3 3h17l-2 13-9 5z" fill="#e0e0e0" stroke="#bcbcbc" stroke-dasharray="2 1.500"/><rect x="13.500" y="13.500" width="9" height="9" rx="1.500" fill="#d0d0d0" stroke="#bcbcbc"/><path d="M18 15.500v5M15.500 18h5" stroke="#f4f4f4" stroke-width="1.500"/></svg>
<div class="abs" style="left:1138.0px;top:170px;width:24px;height:24px;background:#e6e6e6"></div>
<svg class="abs" style="left:1138.0px;top:170.0px;opacity:0.8" width="24" height="24" viewBox="0 0 24 24"><path d="M3 3h17l-2 13-9 5z" fill="#e0e0e0" stroke="#bcbcbc" stroke-dasharray="2 1.500"/><rect x="8" y="10" width="12" height="9" fill="#d0d0d0"/><path d="M8 13h12M8 16h12M12 10v9M16 10v9" stroke="#e8e8e8"/><rect x="16.500" y="16.500" width="6" height="6" rx="1" fill="#e4e4e4" stroke="#bcbcbc"/></svg>
<div class="abs" style="left:1168.4px;top:170px;width:24px;height:24px;background:#e6e6e6"></div>
<svg class="abs" style="left:1168.4px;top:170.0px;opacity:0.8" width="24" height="24" viewBox="0 0 24 24"><path d="M3 3h17l-2 13-9 5z" fill="#e0e0e0" stroke="#bcbcbc" stroke-dasharray="2 1.500"/><circle cx="18" cy="18" r="4.500" fill="#e4e4e4" stroke="#bcbcbc"/><path d="M15.500 20.500l5-5" stroke="#bcbcbc" stroke-width="1.300"/></svg>
<svg class="abs" style="left:1201.0px;top:170.0px;opacity:0.8" width="24" height="24" viewBox="0 0 24 24"><rect x="0" y="0" width="12" height="24" fill="#dcdcd8"/><rect x="12" y="0" width="12" height="15" fill="#d8d8d0"/><path d="M0 6h24M0 12h24M0 18h12M6 0v24M12 0v24M18 0v15" stroke="#e4e4e0" stroke-width=".8"/></svg>
<div class="abs" style="left:4px;top:209px;width:44px;height:2px;background-image:radial-gradient(circle at 1px 1px,#b4b4b4 0.9px,transparent 1.200px);background-size:4px 2px"></div>
<svg class="abs" style="left:5.0px;top:220.5px" width="25" height="25" viewBox="0 0 24 24"><path d="M3 3l6 14 8-13" fill="none" stroke="#222" stroke-width="1.400"/><circle cx="3" cy="3" r="1.700" fill="#fff" stroke="#222"/><circle cx="9" cy="17" r="1.700" fill="#fff" stroke="#222"/><circle cx="17" cy="4" r="1.700" fill="#fff" stroke="#222"/><path d="M17 4h4" stroke="#222"/><circle cx="21" cy="4" r="1.200" fill="#fff" stroke="#222" stroke-width=".8"/><rect x="14.500" y="14.500" width="9" height="9" rx="1.800" fill="#8dbb8a" stroke="#6a9a68" stroke-width=".7"/><path d="M19 16v6M16 19h6" stroke="#fff" stroke-width="1.900"/></svg>
<svg class="abs" style="left:5.0px;top:251.5px" width="25" height="25" viewBox="0 0 24 24"><path d="M1 1h6v6H1zM13 1h6v6h-6zM7 7h6v6H7zM1 13h6v6H1z" fill="#2a3a5a"/><path d="M7 1h6v6H7zM1 7h6v6H1zM13 7h6v6h-6zM7 13h6v6H7z" fill="#5a7ab0"/><rect x="14.500" y="14.500" width="9" height="9" rx="1.800" fill="#8dbb8a" stroke="#6a9a68" stroke-width=".7"/><path d="M19 16v6M16 19h6" stroke="#fff" stroke-width="1.900"/></svg>
<svg class="abs" style="left:5.0px;top:281.5px" width="25" height="25" viewBox="0 0 24 24"><rect x="1.500" y="1.500" width="19" height="19" fill="#8aaad4" stroke="#2a4a7a" stroke-width="1.200"/><path d="M1.500 12h19M11 1.500v19M1.500 1.500l9.500 10.500M20.500 1.500L11 12M6 12v8.500M16 12v8.500" stroke="#2a4a7a" stroke-width="1.100"/><rect x="14.500" y="14.500" width="9" height="9" rx="1.800" fill="#8dbb8a" stroke="#6a9a68" stroke-width=".7"/><path d="M19 16v6M16 19h6" stroke="#fff" stroke-width="1.900"/></svg>
<svg class="abs" style="left:5.0px;top:311.5px" width="25" height="25" viewBox="0 0 24 24"><path d="M4 4c3-3 9-2 10 2s-2 8-8 10c2-3 3-5 2-6-3 1-6-3-4-6z" fill="#4a78b8"/><rect x="14.500" y="14.500" width="9" height="9" rx="1.800" fill="#8dbb8a" stroke="#6a9a68" stroke-width=".7"/><path d="M19 16v6M16 19h6" stroke="#fff" stroke-width="1.900"/></svg>
<svg class="abs" style="left:5.0px;top:341.5px" width="25" height="25" viewBox="0 0 24 24"><path d="M1 20C3 11 9 4 20 2c-1 7-7 13-15 14z" fill="#6a94c8" stroke="#3a5a8a" stroke-width=".8"/><path d="M1 20L12 8" stroke="#2a4470" stroke-width="1.300"/><rect x="14.500" y="14.500" width="9" height="9" rx="1.800" fill="#8dbb8a" stroke="#6a9a68" stroke-width=".7"/><path d="M19 16v6M16 19h6" stroke="#fff" stroke-width="1.900"/></svg>
<svg class="abs" style="left:5.0px;top:371.5px" width="25" height="25" viewBox="0 0 24 24"><rect x="1.500" y="1.500" width="19" height="19" rx="2.500" fill="#8aaad4" stroke="#3a5a8a" stroke-width="1.200"/><path d="M4 4l6.500 13L18 4" fill="none" stroke="#222" stroke-width="1.300"/><circle cx="4" cy="4" r="1.500" fill="#fff" stroke="#222" stroke-width=".8"/><circle cx="10.500" cy="17" r="1.500" fill="#fff" stroke="#222" stroke-width=".8"/><circle cx="18" cy="4" r="1.500" fill="#fff" stroke="#222" stroke-width=".8"/><rect x="14.500" y="14.500" width="9" height="9" rx="1.800" fill="#8dbb8a" stroke="#6a9a68" stroke-width=".7"/><path d="M19 16v6M16 19h6" stroke="#fff" stroke-width="1.900"/></svg>
<svg class="abs" style="left:5.0px;top:401.5px" width="25" height="25" viewBox="0 0 24 24"><path d="M3 3c4-3 11-3 13 0 3 4 2 9-1 12l-1 5h-3l-1-5H8l-2 3c-3-3-5-11-3-15z" fill="#5a84b8" stroke="#2a4a7a" stroke-width=".8"/><circle cx="7" cy="7" r="1" fill="#fff"/><rect x="14.500" y="14.500" width="9" height="9" rx="1.800" fill="#8dbb8a" stroke="#6a9a68" stroke-width=".7"/><path d="M19 16v6M16 19h6" stroke="#fff" stroke-width="1.900"/></svg>
<div class="abs" style="left:36.5px;top:412px;width:0;height:0;border-left:4px solid transparent;border-right:4px solid transparent;border-top:5px solid #000"></div>
<svg class="abs" style="left:5.0px;top:431.5px" width="25" height="25" viewBox="0 0 24 24"><circle cx="10.500" cy="10.500" r="9.500" fill="#b8c8d8" stroke="#5a5a5a"/><path d="M4 6c3 2 5 1 6-2M13 2c-1 4 2 5 5 5M3 13c3-1 5 1 5 5M12 19c0-4 3-5 6-5M8 8l5 2-2 4-4-2z" fill="#6a8ab0"/><path d="M1 10.500h19M10.500 1v19" stroke="#6a6a6a" stroke-width=".7"/><rect x="14.500" y="14.500" width="9" height="9" rx="1.800" fill="#8dbb8a" stroke="#6a9a68" stroke-width=".7"/><path d="M19 16v6M16 19h6" stroke="#fff" stroke-width="1.900"/></svg>
<div class="abs" style="left:36.5px;top:442px;width:0;height:0;border-left:4px solid transparent;border-right:4px solid transparent;border-top:5px solid #000"></div>
<svg class="abs" style="left:5.0px;top:461.5px" width="25" height="25" viewBox="0 0 24 24"><circle cx="10.500" cy="10.500" r="9.500" fill="#3a6aa8" stroke="#2a2a2a" stroke-width="1.200"/><path d="M1 10.500h19M10.500 1v19M3 5.500c5 2 10 2 15 0M3 15.500c5-2 10-2 15 0M10.500 1c-5 4-5 15 0 19M10.500 1c5 4 5 15 0 19" fill="none" stroke="#dce8f4" stroke-width=".9"/><rect x="14.500" y="14.500" width="9" height="9" rx="1.800" fill="#8dbb8a" stroke="#6a9a68" stroke-width=".7"/><path d="M19 16v6M16 19h6" stroke="#fff" stroke-width="1.900"/></svg>
<svg class="abs" style="left:5.0px;top:491.5px" width="25" height="25" viewBox="0 0 24 24"><circle cx="10.500" cy="10.500" r="9.500" fill="#c8d4e0" stroke="#5a5a5a"/><path d="M1 10.500h19M10.500 1v19M10.500 1c-5 4-5 15 0 19M10.500 1c5 4 5 15 0 19" fill="none" stroke="#8a8a8a" stroke-width=".7"/><path d="M5 5l5 10 6-9" fill="none" stroke="#222" stroke-width="1.200"/><circle cx="5" cy="5" r="1.400" fill="#fff" stroke="#222" stroke-width=".8"/><circle cx="10" cy="15" r="1.400" fill="#fff" stroke="#222" stroke-width=".8"/><circle cx="16" cy="6" r="1.400" fill="#fff" stroke="#222" stroke-width=".8"/><rect x="14.500" y="14.500" width="9" height="9" rx="1.800" fill="#8dbb8a" stroke="#6a9a68" stroke-width=".7"/><path d="M19 16v6M16 19h6" stroke="#fff" stroke-width="1.900"/></svg>
<div class="abs" style="left:36.5px;top:502px;width:0;height:0;border-left:4px solid transparent;border-right:4px solid transparent;border-top:5px solid #000"></div>
<svg class="abs" style="left:5.0px;top:521.5px" width="25" height="25" viewBox="0 0 24 24"><path d="M3 3l6 14 8-13" fill="none" stroke="#222" stroke-width="1.400"/><circle cx="3" cy="3" r="1.700" fill="#fff" stroke="#222"/><circle cx="9" cy="17" r="1.700" fill="#fff" stroke="#222"/><circle cx="17" cy="4" r="1.700" fill="#fff" stroke="#222"/><path d="M17 4h4" stroke="#222"/><circle cx="21" cy="4" r="1.200" fill="#fff" stroke="#222" stroke-width=".8"/><rect x="14.500" y="14.500" width="9" height="9" rx="1.500" fill="#e8d44a" stroke="#c8b02a" stroke-width=".7"/><path d="M19 16v6M16 19h6M17 17l4 4M21 17l-4 4" stroke="#fff" stroke-width="1.200"/></svg>
<div class="abs" style="left:36.5px;top:532px;width:0;height:0;border-left:4px solid transparent;border-right:4px solid transparent;border-top:5px solid #000"></div>
<svg class="abs" style="left:12.0px;top:553.5px" width="25" height="25" viewBox="0 0 24 24"><rect x="1.500" y="1.500" width="19" height="18" fill="#3a5a8a"/><path d="M1.500 6h19M1.500 10.500h19M1.500 15h19M6.500 1.500v18M11.500 1.500v18M16.500 1.500v18" stroke="#c4d4ea" stroke-width="1"/><rect x="14.500" y="14.500" width="9" height="9" rx="1.800" fill="#8dbb8a" stroke="#6a9a68" stroke-width=".7"/><path d="M19 16v6M16 19h6" stroke="#fff" stroke-width="1.900"/></svg>
<svg class="abs" style="left:54.5px;top:245.5px" width="17" height="17" viewBox="0 0 24 24"><path d="M3 14l8-2 2 5-8 3z" fill="#d2642e"/><path d="M10 11L20 3l1.500 2L13 14z" fill="#e8c83a" stroke="#a8922a" stroke-width=".7"/><path d="M4 19l4 2" stroke="#e8a83a" stroke-width="2"/></svg>
<svg class="abs" style="left:77.5px;top:245.5px" width="17" height="17" viewBox="0 0 24 24"><path d="M3 9v11h10" fill="none" stroke="#aaa" stroke-width="1.300"/><rect x="6.500" y="6.500" width="11" height="11" fill="#f4f4f4" stroke="#8a8a8a"/><rect x="9.500" y="2.500" width="5" height="12" fill="#e8ecf0" stroke="#7a7a7a"/><rect x="13.500" y="13.500" width="10" height="10" rx="2" fill="#5d9a5a" stroke="#3c6a3a" stroke-width=".8"/><path d="M18.500 15.500v6M15.500 18.500h6" stroke="#fff" stroke-width="2"/></svg>
<svg class="abs" style="left:100.5px;top:245.5px" width="17" height="17" viewBox="0 0 24 24"><path d="M2 11c4-6 14-6 18 0-4 5-14 5-18 0z" fill="#dce8f4" stroke="#8a9ab0" stroke-width="1"/><circle cx="11" cy="11" r="3.500" fill="#5a7aa8"/><circle cx="11" cy="11" r="1.500" fill="#1a2a4a"/><path d="M13 16h9l-4.500 5z" fill="#000"/></svg>
<svg class="abs" style="left:123.5px;top:245.5px" width="17" height="17" viewBox="0 0 24 24"><path d="M2 3h20v3l-7 7v9l-6-2v-7L2 6z" fill="#6a94c8" stroke="#3a5a8a" stroke-width=".8"/><rect x="2" y="2" width="20" height="3.500" rx="1.500" fill="#e8c83a" stroke="#a8922a" stroke-width=".7"/></svg>
<svg class="abs" style="left:146.5px;top:245.5px" width="17" height="17" viewBox="0 0 24 24"><text x="1" y="15" font-size="20" font-family="Liberation Serif" fill="#8a3a8a">ε</text><path d="M13 13h8v8h-8z" fill="#e4e4e4" stroke="#aaa"/><path d="M14.500 17c0-3 5-3 5 0v4" fill="none" stroke="#aaa"/></svg>
<svg class="abs" style="left:184.5px;top:245.5px" width="17" height="17" viewBox="0 0 24 24"><rect x="3" y="3" width="12" height="18" fill="#f8e8a8" stroke="#c8a83a" stroke-width=".8"/><path d="M5 6h3M5 11h3M5 16h3" stroke="#d88a3a" stroke-width="1.500"/><path d="M17 2v12h3.500L15 21l-5.500-7H13V2z" fill="#4a78b8" stroke="#2a4a7a" stroke-width=".7"/></svg>
<svg class="abs" style="left:207.5px;top:245.5px" width="17" height="17" viewBox="0 0 24 24"><rect x="3" y="3" width="12" height="18" fill="#f8e8a8" stroke="#c8a83a" stroke-width=".8"/><path d="M5 6h3M5 11h3M5 16h3" stroke="#d88a3a" stroke-width="1.500"/><path d="M13 21V9H9.500L15 2l5.500 7H17v12z" fill="#4a78b8" stroke="#2a4a7a" stroke-width=".7"/></svg>
<svg class="abs" style="left:230.5px;top:245.5px" width="17" height="17" viewBox="0 0 24 24"><rect x="2.500" y="2.500" width="16" height="15" fill="#fff" stroke="#8a8a8a" stroke-width="1.200"/><rect x="14" y="14.500" width="9" height="6" rx="1.500" fill="#d83a3a"/><path d="M16 17.500h5" stroke="#fff" stroke-width="1.500"/></svg>
<div class="abs" style="left:170.5px;top:252px;width:0;height:0;border-left:4px solid transparent;border-right:4px solid transparent;border-top:5px solid #000"></div>
<svg class="abs" style="left:54.5px;top:690.5px" width="17" height="17" viewBox="0 0 24 24"><rect x="2.500" y="2.500" width="15" height="15" fill="#fff" stroke="#8a8a8a" stroke-width="1.200"/><circle cx="18" cy="18" r="4" fill="#5d9a5a" stroke="#fff"/><circle cx="18" cy="18" r="1.500" fill="#d0e8d0"/></svg>
<svg class="abs" style="left:77.5px;top:690.5px" width="17" height="17" viewBox="0 0 24 24"><path d="M3 11a9 9 0 0 1 15-6l2.500-2.500v8h-8l2.500-2.500a5 5 0 0 0-8 3z" fill="#4a8ad0" stroke="#2a5a9a" stroke-width=".6"/><path d="M21 13a9 9 0 0 1-15 6l-2.500 2.500v-8h8l-2.500 2.500a5 5 0 0 0 8-3z" fill="#6aa6e4" stroke="#2a5a9a" stroke-width=".6"/></svg>
<svg class="abs" style="left:100.5px;top:690.5px" width="17" height="17" viewBox="0 0 24 24"><path d="M2 3h20v3l-7 7v9l-6-2v-7L2 6z" fill="#6a94c8" stroke="#3a5a8a" stroke-width=".8"/><rect x="2" y="2" width="20" height="3.500" rx="1.500" fill="#e8c83a" stroke="#a8922a" stroke-width=".7"/></svg>
<svg class="abs" style="left:123.5px;top:690.5px" width="17" height="17" viewBox="0 0 24 24"><rect x="3" y="3" width="12" height="18" fill="#f8e8a8" stroke="#c8a83a" stroke-width=".8"/><path d="M5 6h3M5 11h3M5 16h3" stroke="#d88a3a" stroke-width="1.500"/><path d="M13 21V9H9.500L15 2l5.500 7H17v12z" fill="#4a78b8" stroke="#2a4a7a" stroke-width=".7"/></svg>
<svg class="abs" style="left:146.5px;top:690.5px" width="17" height="17" viewBox="0 0 24 24"><circle cx="12" cy="12" r="10" fill="#6a94c8" stroke="#3a5a8a" stroke-width=".8"/><text x="9.500" y="18" font-size="15" font-weight="bold" font-style="italic" font-family="Liberation Serif" fill="#fff">i</text></svg>
<!-- b_panels -->
<div class="panelhead" style="left:50px;top:207px;width:357px;height:32px"></div>
<div class="t" style="left:55.5px;top:217.5px;font-size:16px;letter-spacing:-0.35px">Layer</div>
<svg class="abs" style="left:360px;top:214px" width="46" height="20" viewBox="0 0 46 20">
<rect x="5" y="2" width="10" height="9" fill="none" stroke="#222" stroke-width="2.4"/><rect x="1.5" y="7" width="10" height="9" fill="#d6d6d6" stroke="#222" stroke-width="2.4"/>
<path d="M27 3L40 16M40 3L27 16" stroke="#222" stroke-width="3.4"/></svg>
<div class="tree" style="left:50px;top:267px;width:357px;height:380px"></div>
<div class="abs" style="left:52px;top:268px;width:334px;height:358px;overflow:hidden">
<div class="abs" style="left:27px;top:0;width:16px;height:1px;background:#8a8a8a"></div>
<div class="abs" style="left:56px;top:0;width:6px;height:1px;background:#333"></div>
<div class="abs" style="left:117px;top:0;width:9px;height:1px;background:#666"></div>
<div class="abs" style="left:169px;top:0;width:5px;height:1px;background:#666"></div>
<svg class="abs" style="left:26px;top:6px" width="20" height="22" viewBox="0 0 20 22">
<rect x="1" y="1" width="17" height="20" rx="2" fill="#e6e6e6" stroke="#9a9a9a"/>
<g stroke="#8c8c8c" stroke-width="1.6"><path d="M3.5 5.5h4M10 5.5h6M3.5 10h4M10 10h6M3.5 14.5h4M10 14.5h6M3.5 18.5h4M10 18.5h6"/></g></svg>
<div class="row" style="left:53px;top:10px;font-weight:bold;letter-spacing:-0.19px">Funde_WT_2017_2019</div>
<svg class="abs" style="left:26px;top:30px" width="20" height="22" viewBox="0 0 20 22">
<rect x="1" y="1" width="17" height="20" rx="2" fill="#e6e6e6" stroke="#9a9a9a"/>
<g stroke="#8c8c8c" stroke-width="1.6"><path d="M3.5 5.5h4M10 5.5h6M3.5 10h4M10 10h6M3.5 14.5h4M10 14.5h6M3.5 18.5h4M10 18.5h6"/></g></svg>
<div class="row" style="left:53px;top:34px;font-weight:bold">funde_strasse_wege</div>
<svg class="abs" style="left:5px;top:62px" width="12" height="8"><path d="M1.5 1.5L6 6L10.5 1.5" fill="none" stroke="#404040" stroke-width="1.5"/></svg>
<div class="cb" style="left:28px;top:58px"><svg width="13" height="13" viewBox="0 0 13 13"><path d="M2.2 6.6L5 9.6L10.8 2.8" fill="none" stroke="#222" stroke-width="1.3"/></svg></div>
<svg class="abs" style="left:50px;top:54px" width="21" height="21" viewBox="0 0 18 18">
<path d="M1.5 8.5v7h8" fill="none" stroke="#b8b8b8" stroke-width="1.2"/>
<rect x="4.5" y="4.5" width="10" height="10" fill="#f4f4f4" stroke="#8a8a8a"/>
<rect x="7.5" y="1.5" width="5" height="10" fill="#e8ecf0" stroke="#7a7a7a"/>
<rect x="9" y="6.5" width="2" height="6" fill="#fff" stroke="#7a7a7a" stroke-width=".8"/></svg>
<div class="row" style="left:75px;top:58px;;letter-spacing:-0.7px">Strasse_Wege</div>
<div class="abs" style="left:50px;top:77px;width:285px;height:24px;background:#cde6fb"></div>
<div class="abs" style="left:73px;top:77px;width:262px;height:24px;border:1px dotted #444;border-right:none"></div>
<div class="cb" style="left:52px;top:82px"><svg width="13" height="13" viewBox="0 0 13 13"><path d="M2.2 6.6L5 9.6L10.8 2.8" fill="none" stroke="#222" stroke-width="1.3"/></svg></div>
<div class="abs" style="left:73px;top:87px;width:20px;height:5px;background:#8c8c7a"></div>
<div class="row" style="left:99px;top:82px;font-weight:bold;text-decoration:underline;letter-spacing:-0.53px">strassen_und_wege strasse</div>
<div class="cb" style="left:52px;top:106px"></div>
<div class="abs" style="left:73px;top:109px;width:20px;height:8px;background:#000"></div>
<div class="row" style="left:99px;top:106px;font-weight:bold;font-style:italic;color:#7f7f7f">Strasse</div>
<div class="cb" style="left:52px;top:130px"></div>
<div class="abs" style="left:73px;top:137px;width:20px;height:2px;background:#a9d0a9"></div>
<div class="row" style="left:99px;top:130px;font-weight:bold;font-style:italic;color:#7f7f7f">strassen_und_wege</div>
<div class="cb" style="left:52px;top:154px"><svg width="13" height="13" viewBox="0 0 13 13"><path d="M2.2 6.6L5 9.6L10.8 2.8" fill="none" stroke="#222" stroke-width="1.3"/></svg></div>
<div class="abs" style="left:73px;top:160px;width:20px;height:3px;background:#1a1ab4"></div>
<div class="row" style="left:99px;top:154px;font-weight:bold;letter-spacing:-0.27px">Zugangsweg</div>
<svg class="abs" style="left:33px;top:180px" width="8" height="12"><path d="M1.5 1.5L6 6L1.5 10.5" fill="none" stroke="#a0a0a0" stroke-width="1.4"/></svg>
<div class="cb" style="left:52px;top:178px"><svg width="13" height="13" viewBox="0 0 13 13"><path d="M2.2 6.6L5 9.6L10.8 2.8" fill="none" stroke="#222" stroke-width="1.3"/></svg></div>
<svg class="abs" style="left:74px;top:174px" width="21" height="21" viewBox="0 0 18 18">
<path d="M1.5 8.5v7h8" fill="none" stroke="#b8b8b8" stroke-width="1.2"/>
<rect x="4.5" y="4.5" width="10" height="10" fill="#f4f4f4" stroke="#8a8a8a"/>
<rect x="7.5" y="1.5" width="5" height="10" fill="#e8ecf0" stroke="#7a7a7a"/>
<rect x="9" y="6.5" width="2" height="6" fill="#fff" stroke="#7a7a7a" stroke-width=".8"/></svg>
<div class="row" style="left:100px;top:178px;;letter-spacing:-0.22px">Rundweg</div>
<div class="cb" style="left:52px;top:202px"></div>
<div class="abs" style="left:73px;top:208px;width:20px;height:3px;background:#000"></div>
<div class="row" style="left:99px;top:202px;font-weight:bold;font-style:italic;color:#7f7f7f">strasse_wege_zusammen</div>
<div class="cb" style="left:52px;top:226px"></div>
<div class="abs" style="left:74px;top:224px;width:19px;height:19px;background:#fff;border:2px solid #cf3030;border-radius:2px"></div>
<div class="row" style="left:99px;top:226px;font-weight:bold;font-style:italic;color:#7f7f7f;letter-spacing:-0.33px">puffer_3m_strasse_wege</div>
<div class="cb" style="left:52px;top:250px"></div>
<svg class="abs" style="left:74px;top:246px" width="21" height="21" viewBox="0 0 18 18">
<path d="M1.5 8.5v7h8" fill="none" stroke="#b8b8b8" stroke-width="1.2"/>
<rect x="4.5" y="4.5" width="10" height="10" fill="#f4f4f4" stroke="#8a8a8a"/>
<rect x="7.5" y="1.5" width="5" height="10" fill="#e8ecf0" stroke="#7a7a7a"/>
<rect x="9" y="6.5" width="2" height="6" fill="#fff" stroke="#7a7a7a" stroke-width=".8"/></svg>
<div class="row" style="left:100px;top:250px;;letter-spacing:-0.75px">Strasse</div>
<svg class="abs" style="left:8px;top:276px" width="8" height="12"><path d="M1.5 1.5L6 6L1.5 10.5" fill="none" stroke="#a0a0a0" stroke-width="1.4"/></svg>
<div class="cb" style="left:28px;top:274px"><svg width="13" height="13" viewBox="0 0 13 13"><path d="M2.2 6.6L5 9.6L10.8 2.8" fill="none" stroke="#222" stroke-width="1.3"/></svg></div>
<svg class="abs" style="left:50px;top:270px" width="21" height="21" viewBox="0 0 18 18">
<path d="M1.5 8.5v7h8" fill="none" stroke="#b8b8b8" stroke-width="1.2"/>
<rect x="4.5" y="4.5" width="10" height="10" fill="#f4f4f4" stroke="#8a8a8a"/>
<rect x="7.5" y="1.5" width="5" height="10" fill="#e8ecf0" stroke="#7a7a7a"/>
<rect x="9" y="6.5" width="2" height="6" fill="#fff" stroke="#7a7a7a" stroke-width=".8"/></svg>
<div class="row" style="left:75px;top:274px;;letter-spacing:-0.83px">NSG_1937_und_1983</div>
<svg class="abs" style="left:8px;top:300px" width="8" height="12"><path d="M1.5 1.5L6 6L1.5 10.5" fill="none" stroke="#a0a0a0" stroke-width="1.4"/></svg>
<div class="cb" style="left:28px;top:298px"><svg width="13" height="13" viewBox="0 0 13 13"><path d="M2.2 6.6L5 9.6L10.8 2.8" fill="none" stroke="#222" stroke-width="1.3"/></svg></div>
<svg class="abs" style="left:50px;top:294px" width="21" height="21" viewBox="0 0 18 18">
<path d="M1.5 8.5v7h8" fill="none" stroke="#b8b8b8" stroke-width="1.2"/>
<rect x="4.5" y="4.5" width="10" height="10" fill="#f4f4f4" stroke="#8a8a8a"/>
<rect x="7.5" y="1.5" width="5" height="10" fill="#e8ecf0" stroke="#7a7a7a"/>
<rect x="9" y="6.5" width="2" height="6" fill="#fff" stroke="#7a7a7a" stroke-width=".8"/></svg>
<div class="row" style="left:75px;top:298px;;letter-spacing:-0.19px">Pflanzengesellschaften</div>
<svg class="abs" style="left:8px;top:324px" width="8" height="12"><path d="M1.5 1.5L6 6L1.5 10.5" fill="none" stroke="#a0a0a0" stroke-width="1.4"/></svg>
<div class="cb" style="left:28px;top:322px"><svg width="13" height="13" viewBox="0 0 13 13"><path d="M2.2 6.6L5 9.6L10.8 2.8" fill="none" stroke="#222" stroke-width="1.3"/></svg></div>
<svg class="abs" style="left:50px;top:318px" width="21" height="21" viewBox="0 0 18 18">
<path d="M1.5 8.5v7h8" fill="none" stroke="#b8b8b8" stroke-width="1.2"/>
<rect x="4.5" y="4.5" width="10" height="10" fill="#f4f4f4" stroke="#8a8a8a"/>
<rect x="7.5" y="1.5" width="5" height="10" fill="#e8ecf0" stroke="#7a7a7a"/>
<rect x="9" y="6.5" width="2" height="6" fill="#fff" stroke="#7a7a7a" stroke-width=".8"/></svg>
<div class="row" style="left:75px;top:322px;;letter-spacing:0.3px">Biotope</div>
<svg class="abs" style="left:8px;top:348px" width="8" height="12"><path d="M1.5 1.5L6 6L1.5 10.5" fill="none" stroke="#a0a0a0" stroke-width="1.4"/></svg>
<div class="cb" style="left:28px;top:346px"></div>
<svg class="abs" style="left:50px;top:342px" width="21" height="21" viewBox="0 0 18 18">
<path d="M1.5 8.5v7h8" fill="none" stroke="#b8b8b8" stroke-width="1.2"/>
<rect x="4.5" y="4.5" width="10" height="10" fill="#f4f4f4" stroke="#8a8a8a"/>
<rect x="7.5" y="1.5" width="5" height="10" fill="#e8ecf0" stroke="#7a7a7a"/>
<rect x="9" y="6.5" width="2" height="6" fill="#fff" stroke="#7a7a7a" stroke-width=".8"/></svg>
<div class="row" style="left:75px;top:346px;;letter-spacing:-0.1px">Baumfreie_offene_Moorbereiche</div>
</div>
<div class="abs" style="left:82px;top:341px;width:279px;height:36px;border:4px solid #e30613"></div>
<div class="sb" style="left:386px;top:268px;width:20px;height:358px"></div>
<div class="thumb" style="left:387px;top:352px;width:18px;height:161px"></div>
<svg class="abs" style="left:390px;top:274px" width="12" height="8"><path d="M1.5 6.5L6 2L10.5 6.5" fill="none" stroke="#505050" stroke-width="1.5"/></svg>
<svg class="abs" style="left:390px;top:610px" width="12" height="8"><path d="M1.5 1.5L6 6L10.5 1.5" fill="none" stroke="#505050" stroke-width="1.5"/></svg>
<div class="sb" style="left:51px;top:626px;width:335px;height:20px"></div>
<div class="thumb" style="left:72px;top:626px;width:193px;height:19px"></div>
<svg class="abs" style="left:57px;top:629px" width="8" height="12"><path d="M6.5 1.5L2 6L6.5 10.5" fill="none" stroke="#505050" stroke-width="1.5"/></svg>
<svg class="abs" style="left:371px;top:629px" width="8" height="12"><path d="M1.5 1.5L6 6L1.5 10.5" fill="none" stroke="#505050" stroke-width="1.5"/></svg>
<div class="abs" style="left:386px;top:626px;width:20px;height:20px;background:#f0f0f0"></div>
<div class="panelhead" style="left:50px;top:653px;width:357px;height:31px"></div>
<div class="t" style="left:55.5px;top:662.5px;font-size:16px;letter-spacing:-0.35px">Browser</div>
<svg class="abs" style="left:360px;top:659px" width="46" height="20" viewBox="0 0 46 20">
<rect x="5" y="2" width="10" height="9" fill="none" stroke="#222" stroke-width="2.4"/><rect x="1.5" y="7" width="10" height="9" fill="#d6d6d6" stroke="#222" stroke-width="2.4"/>
<path d="M27 3L40 16M40 3L27 16" stroke="#222" stroke-width="3.4"/></svg>
<div class="tree" style="left:50px;top:712px;width:357px;height:287px"></div>
<div class="abs" style="left:52px;top:713px;width:334px;height:285px;overflow:hidden">
<svg class="abs" style="left:26px;top:0px" width="24" height="24" viewBox="0 0 24 24"><path d="M11 1.5l2.9 6.4 6.9.7-5.2 4.6 1.5 6.8-6.1-3.6-6.1 3.6 1.5-6.8L1.2 8.6l6.9-.7z" fill="#fdf04a" stroke="#a89a1c" stroke-width="1.2"/></svg>
<div class="row" style="left:53px;top:5px;letter-spacing:-0.25px">Favoriten</div>
<svg class="abs" style="left:8px;top:31px" width="8" height="12"><path d="M1.5 1.5L6 6L1.5 10.5" fill="none" stroke="#a0a0a0" stroke-width="1.4"/></svg>
<svg class="abs" style="left:26px;top:24px" width="24" height="24" viewBox="0 0 24 24"><rect x="3" y="3" width="15" height="16" rx="1.5" fill="#d0d0d0" stroke="#8c8c8c"/><path d="M6 3v16" stroke="#a8a8a8"/><path d="M11 3h4v8l-2-1.5-2 1.5z" fill="#5a7fb8"/></svg>
<div class="row" style="left:53px;top:29px;letter-spacing:-0.33px">Räumliche Lesezeichen</div>
<svg class="abs" style="left:8px;top:55px" width="8" height="12"><path d="M1.5 1.5L6 6L1.5 10.5" fill="none" stroke="#a0a0a0" stroke-width="1.4"/></svg>
<svg class="abs" style="left:26px;top:48px" width="24" height="24" viewBox="0 0 24 24"><rect x="2.5" y="3.5" width="17" height="15" rx="1" fill="#b4d86a" stroke="#6c8c3c"/><path d="M9 8l6-2 3 4-5 4z" fill="#2c8c2c"/><path d="M3 18l8-8 3 3-5 5z" fill="#dcecb0"/></svg>
<div class="row" style="left:53px;top:53px;letter-spacing:-0.2px">Projektverzeichnis</div>
<svg class="abs" style="left:8px;top:79px" width="8" height="12"><path d="M1.5 1.5L6 6L1.5 10.5" fill="none" stroke="#a0a0a0" stroke-width="1.4"/></svg>
<svg class="abs" style="left:26px;top:72px" width="24" height="24" viewBox="0 0 24 24"><rect x="2.5" y="3.5" width="17" height="15" fill="#f4f4f4" stroke="#8c8c8c"/><path d="M6.5 12l4.5-4.5 4.5 4.5v4h-9z" fill="#fff" stroke="#444" stroke-width="1.3"/></svg>
<div class="row" style="left:53px;top:77px;letter-spacing:0.15px">Home</div>
<svg class="abs" style="left:8px;top:103px" width="8" height="12"><path d="M1.5 1.5L6 6L1.5 10.5" fill="none" stroke="#a0a0a0" stroke-width="1.4"/></svg>
<svg class="abs" style="left:26px;top:96px" width="24" height="24" viewBox="0 0 24 24"><path d="M3.5 5.5h5l1.5 2h9.500v11h-16z" fill="#f0f0f0" stroke="#a0a0a0"/></svg>
<div class="row" style="left:53px;top:101px;letter-spacing:-0.45px">C:\</div>
<svg class="abs" style="left:8px;top:127px" width="8" height="12"><path d="M1.5 1.5L6 6L1.5 10.5" fill="none" stroke="#a0a0a0" stroke-width="1.4"/></svg>
<svg class="abs" style="left:26px;top:120px" width="24" height="24" viewBox="0 0 24 24"><path d="M3.5 5.5h5l1.5 2h9.500v11h-16z" fill="#f0f0f0" stroke="#a0a0a0"/></svg>
<div class="row" style="left:53px;top:125px;letter-spacing:-0.45px">D:\</div>
<svg class="abs" style="left:8px;top:151px" width="8" height="12"><path d="M1.5 1.5L6 6L1.5 10.5" fill="none" stroke="#a0a0a0" stroke-width="1.4"/></svg>
<svg class="abs" style="left:26px;top:144px" width="24" height="24" viewBox="0 0 24 24"><path d="M3.5 5.5h5l1.5 2h9.500v11h-16z" fill="#f0f0f0" stroke="#a0a0a0"/></svg>
<div class="row" style="left:53px;top:149px;letter-spacing:-0.45px">E:\</div>
<svg class="abs" style="left:8px;top:175px" width="8" height="12"><path d="M1.5 1.5L6 6L1.5 10.5" fill="none" stroke="#a0a0a0" stroke-width="1.4"/></svg>
<svg class="abs" style="left:26px;top:168px" width="24" height="24" viewBox="0 0 24 24"><path d="M3.5 5.5h5l1.5 2h9.500v11h-16z" fill="#f0f0f0" stroke="#a0a0a0"/></svg>
<div class="row" style="left:53px;top:173px;letter-spacing:-0.45px">F:\</div>
<svg class="abs" style="left:8px;top:199px" width="8" height="12"><path d="M1.5 1.5L6 6L1.5 10.5" fill="none" stroke="#a0a0a0" stroke-width="1.4"/></svg>
<svg class="abs" style="left:26px;top:192px" width="24" height="24" viewBox="0 0 24 24"><path d="M3.5 5.5h5l1.5 2h9.500v11h-16z" fill="#f0f0f0" stroke="#a0a0a0"/></svg>
<div class="row" style="left:53px;top:197px;letter-spacing:-0.45px">G:\</div>
<svg class="abs" style="left:8px;top:223px" width="8" height="12"><path d="M1.5 1.5L6 6L1.5 10.5" fill="none" stroke="#a0a0a0" stroke-width="1.4"/></svg>
<svg class="abs" style="left:26px;top:216px" width="24" height="24" viewBox="0 0 24 24"><path d="M2 9l9-4 9 4v8l-9 4-9-4z" fill="#e8c830" stroke="#8c7410"/><path d="M2 9l9 4 9-4M11 13v8" fill="none" stroke="#8c7410"/><ellipse cx="11" cy="7.5" rx="7" ry="4.500" fill="#4a78b8"/><path d="M7 6l3-1.500 2 2-3 1.500zM13 8l3-1 1 1.500-3 1z" fill="#a0d060"/></svg>
<div class="row" style="left:53px;top:221px;letter-spacing:-0.6px">GeoPackage</div>
<svg class="abs" style="left:26px;top:240px" width="24" height="24" viewBox="0 0 24 24"><path d="M2 21c3-9 8-15 19-18-1 7-7 12-15 14z" fill="#6c94c4" stroke="#3c5c8c"/><path d="M2 21l10-11" stroke="#2c4470" stroke-width="1.2"/></svg>
<div class="row" style="left:53px;top:245px;letter-spacing:-0.1px">SpatiaLite</div>
<svg class="abs" style="left:26px;top:264px" width="24" height="24" viewBox="0 0 24 24"><path d="M4 4c4-3 11-3 14 0 3 4 2 10-1 13l-2 5h-4l-1-5h-3l-2 3c-3-3-4-12-1-16z" fill="#5c84b8" stroke="#2c4c7c"/><circle cx="8" cy="8" r="1" fill="#fff"/></svg>
<div class="row" style="left:53px;top:269px;letter-spacing:-1.0px">PostGIS</div>
</div>
<div class="sb" style="left:386px;top:713px;width:20px;height:285px"></div>
<div class="thumb" style="left:387px;top:735px;width:18px;height:110px"></div>
<svg class="abs" style="left:390px;top:719px" width="12" height="8"><path d="M1.5 6.5L6 2L10.5 6.5" fill="none" stroke="#505050" stroke-width="1.5"/></svg>
<svg class="abs" style="left:390px;top:983px" width="12" height="8"><path d="M1.5 1.5L6 6L10.5 1.5" fill="none" stroke="#505050" stroke-width="1.5"/></svg>
<!-- b_map -->
<div class="abs" style="left:412px;top:207px;width:1508px;height:792px;background:#fff;border:1px solid #828282"></div>
<svg class="abs" style="left:413px;top:208px" width="1506" height="790" viewBox="413 208 1506 790" font-family="Liberation Sans, sans-serif">
<defs><pattern id="hatch" x="1" y="0" width="8" height="8" patternUnits="userSpaceOnUse"><rect x="0" y="0" width="1.2" height="8" fill="#8c0a00" fill-opacity=".88"/></pattern>
<clipPath id="nsgclip"><polygon points="1262,470 1302.5,598.5 1285,825 1201,851.7 1105,859 993,865 867,893 577.5,912.7 565.5,900.3 563.6,886 623,834 780.5,665"/></clipPath></defs>
<polygon points="877,300.5 903,294.5 998,302.5 1088,333 1168,372 1262,470 1040,561 948,599.5 894,631.4 816.3,687.6 719.3,759 743.5,835.5 754,835 767,888 650,908.4 577.5,912.7 565.5,900.3 563.6,886 575,876 588,864 675,768 716.5,699 719.5,658 665,607.5 591,560 587,557.5 567,534 566,511.5 583,490 608,488.6 632,491.5 655.5,511.5 711,576.5 756,616 786,619.5 815,600 824.5,578.6 805,541 700.6,467.4 689.6,443 691,420 708.4,397.8 737.7,389.7 809,403.5 839.4,398.6 858.6,376 868,322" fill="#dcf672" stroke="#6a7040" stroke-width="1"/>
<polygon points="1214.3,491.6 1262,470 1302.5,598.5 1292,738 1300,739.6 1366.7,811.5 1366,829 1350,841.7 1262.5,858.3 1164.6,889.2 1141.7,873 1108,860.4 1044.8,858.3 1033.3,833.3 1110.4,798 1217.7,716.7 1222,710 1269,613.8" fill="#fdb777" stroke="#6a4a30" stroke-width="1.1"/>
<polygon points="1040,561 1214.3,491.6 1269,613.8 1222,710 1217.7,716.7 1110.4,798 1141.7,735.4 1147,681 1140,630 1121,590 1088,566 1042,562" fill="#fd92f4" stroke="#7a2a3a" stroke-width="1.2"/>
<polygon points="719.3,759 816.3,687.6 894,631.4 948,599.5 1042,562 1088,566 1121,590 1140,630 1147,681 1140,735 1112,796 1034,830 975,848 915,867 847,884 812,887 767,889 752,834 743.5,835.5" fill="#fff17a" stroke="#5e5a14" stroke-width="1.1"/>
<path d="M1016.7 636.8 L1016.9 637.3 L1045.2 653.2 L1066.2 583.8 L1045.8 583.8 L1025.7 624.8ZM1061.7 663.9 L1078.8 678.2 L1079.2 678.2 L1120.8 616.1 L1107.2 598.8 L1106.8 598.8ZM920.7 727.4 L921.2 727.7 L938.3 711.1 L950.3 680.1 L979.3 608.1 L979.1 607.7 L955.7 612.4 L928.7 696.9ZM1085.8 704.2 L1126.1 704.3 L1128.3 683.9 L1074.9 683.7 L1074.7 684.1ZM855.9 696.7 L844.4 734.9 L833.9 773.4 L830.4 788.4 L798.5 805.4 L822.9 730.6 L817.7 717.8 L817.3 717.8 L795.5 734.9 L772.7 788.5 L774.7 806.1 L777.5 806.3 L776.7 809.4 L759.7 835.9 L771.8 888.3 L812.0 887.3 L847.0 884.3 L915.1 867.3 L975.1 848.3 L1033.3 827.7 L1035.1 828.3 L1050.9 810.5 L1050.7 810.1 L993.0 792.7 L937.1 795.7 L922.2 789.8 L896.1 753.7 L870.1 767.2 L895.2 650.7 L880.8 648.8 L866.8 691.8ZM1029.8 755.8 L1029.9 756.3 L1100.0 781.3 L1109.3 760.0 L1049.0 739.2Z" fill="#c9a3c4" fill-rule="evenodd" stroke="#6e4a34" stroke-width="1.1"/>
<polygon points="960,800 1034,826 976,846.5 930,826" fill="#fff17a" stroke="#6e4a34" stroke-width="1.1"/>
<polygon points="1016,637 1062,664 1087,704 993,792 941,796 921.4,790.5 895.8,754.4" fill="#809270" stroke="#4a3a24" stroke-width="1.1"/>
<polygon points="945,709 952,704 960,704.5 970,712 977.5,721 995,722.5 1008,729 1015,737.5 1017,748 1016,757.5 1005,767 992.5,772.5 967.5,772.5 957,769 952.5,762.5 955,748 956,735 946,722.5 943,715" fill="#fdb0ac" stroke="#70402c" stroke-width="1.1"/>
<circle cx="916" cy="754" r="12.500" fill="#fdb0ac" stroke="#70402c" stroke-width="1.1"/>
<polygon points="741.7,798 747,786.3 761,783.4 773,788.6 779.5,799 777.2,809.5 769,815.3 756.3,817 747,811.9" fill="#fdb0ac" stroke="#70402c" stroke-width="1.1"/>
<polygon points="897.8,779.5 908,783.4 919.7,803.7 926.7,828 927.5,850.6 910,856.5 896,860 862.5,857.5 810.5,854.5 809.5,844.4 830,824 862.5,802.5" fill="#b9d8b2" stroke="#5e6a44" stroke-width="1.1"/>
<polygon points="766,834 771,843 779,850 802.5,842.5 830,828 862.5,807.5 877.5,791 876,784 865,778 850,780 835,786 812,798 790,812.5 775,823" fill="#6f79ea" stroke="#3c3c6e" stroke-width="1.1"/>
<polygon points="796,861.5 810,855 862.5,857.5 877.5,860 878,871.7 850,881 799.4,884.5" fill="#fdc4c0" stroke="#7e5e44" stroke-width="1.1"/>
<circle cx="828.6" cy="860.5" r="4.800" fill="#86b088" fill-opacity=".9" stroke="#2a3a1a" stroke-width="1.100"/>
<circle cx="837.3" cy="859.9" r="4.800" fill="#86b088" fill-opacity=".9" stroke="#2a3a1a" stroke-width="1.100"/>
<circle cx="846" cy="859.9" r="4.800" fill="#86b088" fill-opacity=".9" stroke="#2a3a1a" stroke-width="1.100"/>
<circle cx="854.2" cy="859.9" r="4.800" fill="#86b088" fill-opacity=".9" stroke="#2a3a1a" stroke-width="1.100"/>
<circle cx="860.6" cy="864.5" r="4.800" fill="#86b088" fill-opacity=".9" stroke="#2a3a1a" stroke-width="1.100"/>
<circle cx="832.7" cy="868" r="4.800" fill="#86b088" fill-opacity=".9" stroke="#2a3a1a" stroke-width="1.100"/>
<circle cx="847.2" cy="865.7" r="4.800" fill="#86b088" fill-opacity=".9" stroke="#2a3a1a" stroke-width="1.100"/>
<circle cx="854.2" cy="868" r="4.800" fill="#86b088" fill-opacity=".9" stroke="#2a3a1a" stroke-width="1.100"/>
<circle cx="844.9" cy="871.5" r="4.800" fill="#86b088" fill-opacity=".9" stroke="#2a3a1a" stroke-width="1.100"/>
<circle cx="839" cy="866" r="4.800" fill="#86b088" fill-opacity=".9" stroke="#2a3a1a" stroke-width="1.100"/>
<circle cx="861.2" cy="839.5" r="4.800" fill="#86b088" fill-opacity=".9" stroke="#2a3a1a" stroke-width="1.100"/>
<circle cx="868.7" cy="839" r="4.800" fill="#86b088" fill-opacity=".9" stroke="#2a3a1a" stroke-width="1.100"/>
<circle cx="861.2" cy="847" r="4.800" fill="#86b088" fill-opacity=".9" stroke="#2a3a1a" stroke-width="1.100"/>
<circle cx="871" cy="847.7" r="4.800" fill="#86b088" fill-opacity=".9" stroke="#2a3a1a" stroke-width="1.100"/>
<circle cx="865.8" cy="843" r="4.800" fill="#86b088" fill-opacity=".9" stroke="#2a3a1a" stroke-width="1.100"/>
<polygon points="1262,470 1302.5,598.5 1285,825 1201,851.7 1105,859 993,865 867,893 577.5,912.7 565.5,900.3 563.6,886 623,834 780.5,665" fill="url(#hatch)"/>
<polygon points="1262,470 1302.5,598.5 1285,825 1201,851.7 1105,859 993,865 867,893 577.5,912.7 565.5,900.3 563.6,886 623,834 780.5,665" fill="none" stroke="#000" stroke-width="5" stroke-linejoin="miter"/>
<polyline points="1100,205 1230,257 1260,289 1363,458 1733,820 1777,881 1808,945 1811,960 1811,998" fill="none" stroke="#b98f47" stroke-width="6" stroke-linejoin="round"/>
<polyline points="1338,427 1200,362 1142,347 1121,363 1093,397 1035,503 1031,591 1027,598 929,697 888,745 790,800 752,834 767,889 812,887 847,884 915,867 975,848 1034,829 1380,700 1543,638" fill="none" stroke="#e014d6" stroke-width="4.300" stroke-linejoin="round"/>
<polyline points="766,889 797,926 875,998" fill="none" stroke="#1616da" stroke-width="4.100" stroke-linejoin="round"/>
<circle cx="1197.7" cy="316" r="3.150"/>
<circle cx="1164.7" cy="345.7" r="3.150"/>
<circle cx="1092.7" cy="392" r="3.150"/>
<circle cx="1244.7" cy="389" r="3.150"/>
<circle cx="1276.7" cy="386.7" r="3.150"/>
<circle cx="1315.7" cy="419.7" r="3.150"/>
<circle cx="1324" cy="418.7" r="3.150"/>
<circle cx="1055.7" cy="458.7" r="3.150"/>
<circle cx="1019.7" cy="495" r="3.150"/>
<circle cx="1037.7" cy="512" r="3.150"/>
<circle cx="1376.7" cy="490" r="3.150"/>
<circle cx="1030.3" cy="544.8" r="3.150"/>
<circle cx="1456.7" cy="563" r="3.150"/>
<circle cx="1462.3" cy="575.7" r="3.150"/>
<circle cx="1464" cy="579" r="3.150"/>
<circle cx="1479.7" cy="597" r="3.150"/>
<circle cx="1501.7" cy="621.7" r="3.150"/>
<circle cx="1535" cy="628" r="3.150"/>
<circle cx="1513.7" cy="651" r="3.150"/>
<circle cx="1466.7" cy="656.7" r="3.150"/>
<circle cx="1461.7" cy="670.7" r="3.150"/>
<circle cx="1381" cy="700" r="3.150"/>
<circle cx="1364" cy="722.7" r="3.150"/>
<circle cx="1404" cy="722.7" r="3.150"/>
<circle cx="1393.7" cy="732.7" r="3.150"/>
<circle cx="1611" cy="707.7" r="3.150"/>
<circle cx="1599.7" cy="714.7" r="3.150"/>
<circle cx="1617.7" cy="714.7" r="3.150"/>
<circle cx="1653" cy="720.7" r="3.150"/>
<circle cx="1585.7" cy="730" r="3.150"/>
<circle cx="1622.7" cy="737.7" r="3.150"/>
<circle cx="1305" cy="741.7" r="3.150"/>
<circle cx="1289.5" cy="743" r="3.150"/>
<circle cx="1668.7" cy="751.7" r="3.150"/>
<circle cx="1694.7" cy="788.7" r="3.150"/>
<circle cx="1657.7" cy="799.7" r="3.150"/>
<circle cx="1775" cy="865" r="3.150"/>
<circle cx="1791" cy="914" r="3.150"/>
<circle cx="1048.7" cy="586" r="3.150"/>
<circle cx="1081" cy="580" r="3.150"/>
<circle cx="980.7" cy="651" r="3.150"/>
<circle cx="980" cy="663.7" r="3.150"/>
<circle cx="988" cy="664.5" r="3.150"/>
<circle cx="1201.7" cy="685.7" r="3.150"/>
<circle cx="958.7" cy="720" r="3.150"/>
<circle cx="956.7" cy="727" r="3.150"/>
<circle cx="905.6" cy="731" r="3.150"/>
<circle cx="1233.7" cy="725" r="3.150"/>
<circle cx="1201.7" cy="732" r="3.150"/>
<circle cx="1220" cy="747" r="3.150"/>
<circle cx="1239" cy="755" r="3.150"/>
<circle cx="1254.5" cy="755" r="3.150"/>
<circle cx="1208.7" cy="763.7" r="3.150"/>
<circle cx="1222" cy="760.7" r="3.150"/>
<circle cx="1210" cy="775.7" r="3.150"/>
<circle cx="1184.5" cy="782" r="3.150"/>
<circle cx="1180" cy="794" r="3.150"/>
<circle cx="1139.7" cy="790.7" r="3.150"/>
<circle cx="1121.7" cy="805.7" r="3.150"/>
<circle cx="1120" cy="812.7" r="3.150"/>
<circle cx="1081" cy="812.7" r="3.150"/>
<circle cx="1025.7" cy="822" r="3.150"/>
<circle cx="1034" cy="829" r="3.150"/>
<circle cx="924" cy="831" r="3.150"/>
<circle cx="975" cy="847.5" r="3.150"/>
<circle cx="955" cy="852.7" r="3.150"/>
<circle cx="915.6" cy="863.7" r="3.150"/>
<circle cx="940.7" cy="872.7" r="3.150"/>
<circle cx="917.7" cy="877.5" r="3.150"/>
<circle cx="1276.7" cy="745" r="3.150"/>
<circle cx="848" cy="778.7" r="3.150"/>
<circle cx="790.7" cy="795.6" r="3.150"/>
<circle cx="792" cy="808" r="3.150"/>
<circle cx="788" cy="813" r="3.150"/>
<circle cx="841.2" cy="811" r="3.150"/>
<circle cx="762" cy="828.7" r="3.150"/>
<circle cx="864" cy="842" r="3.150"/>
<circle cx="813" cy="855.7" r="3.150"/>
<circle cx="786.7" cy="862.7" r="3.150"/>
<circle cx="800.7" cy="870.7" r="3.150"/>
<circle cx="861.5" cy="857.5" r="3.150"/>
<circle cx="868" cy="865" r="3.150"/>
<circle cx="850" cy="875" r="3.150"/>
<circle cx="843.7" cy="878.7" r="3.150"/>
<circle cx="812" cy="885.7" r="3.150"/>
<circle cx="785" cy="890" r="3.150"/>
<circle cx="856" cy="891.5" r="3.150"/>
<circle cx="892.5" cy="890.7" r="3.150"/>
<circle cx="769.7" cy="904.7" r="3.150"/>
<circle cx="785" cy="935.7" r="3.150"/>
<circle cx="793.7" cy="947.7" r="3.150"/>
<circle cx="815.7" cy="948.7" r="3.150"/>
<circle cx="840" cy="968" r="3.150"/>
<circle cx="867" cy="993" r="3.150"/>
<rect x="1620.9" y="659.9" width="6.200" height="6.200" transform="rotate(45 1624 663)"/>
<rect x="1056.9" y="824.9" width="6.200" height="6.200" transform="rotate(45 1060 828)"/>
<rect x="1504.6000000000001" y="669.9" width="6.200" height="6.200" transform="rotate(45 1507.7 673)"/>
<rect x="1462.9" y="686.9" width="6.200" height="6.200" transform="rotate(45 1466 690)"/>
<rect x="1377.9" y="696.9" width="6.200" height="6.200" transform="rotate(45 1381 700)"/>
<path d="M917 758.500l-4.500-6.500h9z"/>
<text x="883" y="538" font-size="16.500" text-anchor="middle">mis</text>
<text x="1179" y="622" font-size="16.500" text-anchor="middle">vpm</text>
<text x="826" y="708" font-size="16.500" text-anchor="middle">vph</text>
<text x="916" y="761" font-size="16.500" text-anchor="middle">ev3</text>
<text x="979" y="749" font-size="16.500" text-anchor="middle">ev4</text>
<text x="947" y="780" font-size="16.500" text-anchor="middle">vpd</text>
<text x="760" y="807" font-size="16.500" text-anchor="middle">evm</text>
<text x="819" y="821" font-size="16.500" text-anchor="middle">vpn</text>
<text x="879" y="834" font-size="16.500" text-anchor="middle">vpb</text>
<text x="827" y="870" font-size="16.500" text-anchor="middle">sma</text>
<text x="1229" y="757" font-size="16.500" text-anchor="middle">vab</text>
<text x="0" y="0" font-size="16.500" text-anchor="middle" transform="translate(857,726) rotate(-76)">vps</text>
<text x="0" y="0" font-size="16.500" text-anchor="middle" transform="translate(933,897) rotate(-14)">nsg_1937</text>
<text x="0" y="0" font-size="12.500" transform="translate(1454,541.5) rotate(43.500)">Bruckmissstraßle</text>
<path d="M1498.300 436.500L1450 514" stroke="#f00" stroke-width="3.200" fill="none"/>
<path d="M1440 530.600L1447.900 505.300L1451.900 512.400L1459.500 512z" fill="#f00"/>
<rect x="975.500" y="914.500" width="120" height="42" rx="10" fill="#ffff80" stroke="#000" stroke-width="1"/>
<text x="1035" y="942" font-size="16" font-weight="bold" text-anchor="middle">Bild 5</text>
</svg>
<!-- b_status -->
<div class="abs" style="left:0;top:999px;width:1920px;height:31px;background:#f0f0f0"></div>
<div class="abs" style="left:0;top:1030px;width:1920px;height:2px;background:#2e2e2c"></div>
<div class="inp" style="left:4px;top:1004px;width:277px;height:22px"></div>
<svg class="abs" style="left:11px;top:1008px" width="14" height="14"><circle cx="5.500" cy="5.500" r="4" fill="none" stroke="#8a8a8a" stroke-width="1.3"/><path d="M8.500 8.500L13 13" stroke="#8a8a8a" stroke-width="1.5"/></svg>
<div class="t" style="left:33px;top:1009.6px;font-size:12.5px;letter-spacing:.17px;color:#7a7a7a">Zu suchender Typ (Strg+K)</div>
<div class="t" style="left:289px;top:1009.6px;font-size:12.5px;letter-spacing:.07px">Bearbeitungsstatus des aktuellen Layers umschalten</div>
<div class="t" style="left:925px;top:1009.6px;font-size:12.5px">Koordinate</div>
<div class="inp" style="left:989px;top:1004px;width:132px;height:22px"></div>
<div class="t" style="left:995px;top:1009.6px;font-size:12.5px;letter-spacing:.15px">473421.9,5397337.1</div>
<div class="t" style="left:1157px;top:1009.6px;font-size:12.5px">Maßstab</div>
<div class="inp" style="left:1208px;top:1004px;width:91px;height:22px"></div>
<div class="t" style="left:1213px;top:1009.6px;font-size:12.5px">1:4000</div>
<svg class="abs" style="left:1281px;top:1011px" width="12" height="8"><path d="M1.5 1.5L6 6L10.5 1.5" fill="none" stroke="#444" stroke-width="1.2"/></svg>
<svg class="abs" style="left:1309px;top:1005px" width="18" height="22"><path d="M5 10V6.500a4 4 0 0 1 8 0V10" fill="none" stroke="#8a8a8a" stroke-width="2"/><rect x="2.500" y="9.500" width="13" height="10.500" rx="1.500" fill="#7c7c7c"/></svg>
<div class="t" style="left:1334px;top:1009.6px;font-size:12.5px;letter-spacing:.2px">Vergrößerung</div>
<div class="inp" style="left:1418px;top:1004px;width:86px;height:22px"></div>
<div class="t" style="left:1421px;top:1009.6px;font-size:12.5px">100%</div>
<div class="abs" style="left:1489px;top:1006px;width:13px;height:18px;border:1px solid #c0c0c0;background:#f6f6f6"></div>
<svg class="abs" style="left:1489px;top:1006px" width="13" height="18"><path d="M3 7L6.500 3L10 7zM3 11L6.500 15L10 11z" fill="#222"/></svg>
<div class="t" style="left:1513px;top:1009.6px;font-size:12.5px">Drehung</div>
<div class="inp" style="left:1570px;top:1004px;width:84px;height:22px"></div>
<div class="t" style="left:1573px;top:1009.6px;font-size:12.5px">0,0 °</div>
<div class="abs" style="left:1639px;top:1006px;width:13px;height:18px;border:1px solid #c0c0c0;background:#f6f6f6"></div>
<svg class="abs" style="left:1639px;top:1006px" width="13" height="18"><path d="M3 7L6.500 3L10 7zM3 11L6.500 15L10 11z" fill="#222"/></svg>
<div class="cb" style="left:1661px;top:1007px;width:16px;height:16px"><svg width="14" height="14" viewBox="0 0 13 13"><path d="M2.2 6.6L5 9.6L10.8 2.800" fill="none" stroke="#222" stroke-width="1.3"/></svg></div>
<div class="t" style="left:1683px;top:1009.6px;font-size:12.5px">Zeichnen</div>
<svg class="abs" style="left:1750px;top:1006px" width="22" height="20" viewBox="0 0 22 20"><ellipse cx="11" cy="10" rx="9" ry="8" fill="#d8d8d8" stroke="#6c6c6c"/><path d="M2 10h18M11 2v16M4 5.500c4 2 10 2 14 0M4 14.500c4-2 10-2 14 0M11 2c-5 4-5 12 0 16M11 2c5 4 5 12 0 16" fill="none" stroke="#6c6c6c" stroke-width=".9"/></svg>
<div class="t" style="left:1775px;top:1009.6px;font-size:12.5px;letter-spacing:-.3px">EPSG:25832</div>
<svg class="abs" style="left:1862px;top:1005px" width="24" height="22" viewBox="0 0 24 22"><path d="M12 2c6 0 10 3.500 10 7.500s-4 7.500-10 7.500c-1 0-2 0-3-.3L5 20l.5-4.500C3.500 14 2 12 2 9.500 2 5.500 6 2 12 2z" fill="#6a6a6a"/><circle cx="7.500" cy="9.500" r="1.400" fill="#fff"/><circle cx="12" cy="9.500" r="1.400" fill="#fff"/><circle cx="16.500" cy="9.500" r="1.400" fill="#fff"/></svg>
<svg class="abs" style="left:1894px;top:1004px" width="26" height="24" viewBox="0 0 26 24"><path d="M3 8h5c-1.500-3 1-5 3-5s4.500 2 3 5h6v5c3-1.500 5 1 5 3" fill="#c8c8c8" stroke="#6c6c6c"/><path d="M3 8v12h6c-1-2 0-4 2.500-4s3.500 2 2.500 4h6v-4" fill="#c8c8c8" stroke="#6c6c6c"/><path d="M4 14l4 3 7-7" fill="none" stroke="#6c6c6c" stroke-width="2"/></svg>
<svg class="abs" style="left:1122px;top:1004px" width="24" height="22" viewBox="0 0 24 22"><ellipse cx="10" cy="10" rx="6" ry="8" transform="rotate(-25 10 10)" fill="none" stroke="#222" stroke-width="1.500"/><path d="M5 4l10 12M4 12l9 6M9 3l8 10" stroke="#222" stroke-width="1.100"/><path d="M17 3l3 3M20 3l-3 3" stroke="#222" stroke-width="1"/></svg>
</div></body></html>
